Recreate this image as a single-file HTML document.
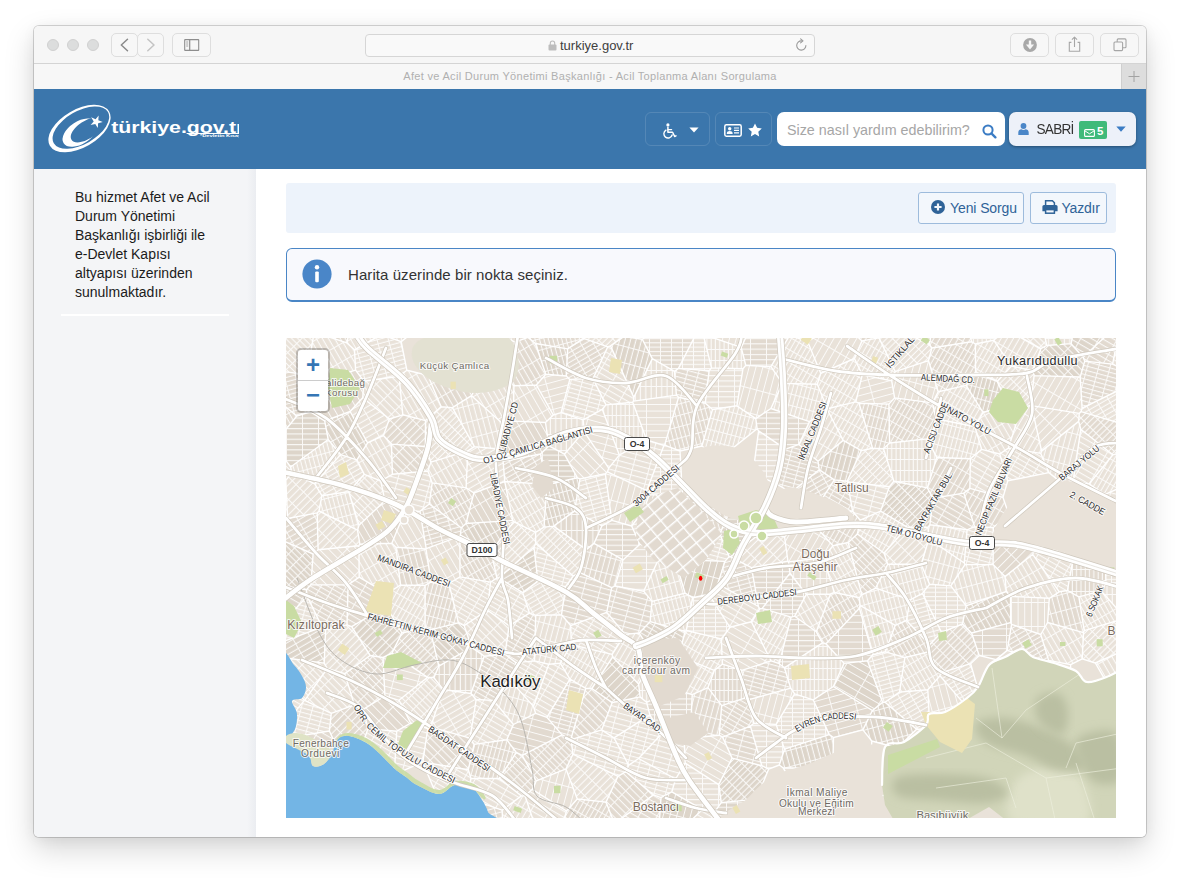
<!DOCTYPE html>
<html lang="tr">
<head>
<meta charset="utf-8">
<title>Afet ve Acil Durum Yönetimi Başkanlığı - Acil Toplanma Alanı Sorgulama</title>
<style>
*{box-sizing:border-box;margin:0;padding:0}
html,body{width:1180px;height:879px;overflow:hidden;background:#fff}
body{font-family:"Liberation Sans","DejaVu Sans",sans-serif;color:#222;position:relative}
#win{position:absolute;left:34px;top:26px;width:1112px;height:811px;border-radius:5px;background:#fff;
  box-shadow:0 0 0 1px rgba(0,0,0,.16),0 12px 30px rgba(0,0,0,.17),0 2px 14px rgba(0,0,0,.05);overflow:hidden}
/* ---------- safari chrome ---------- */
#tb{position:absolute;left:0;top:0;width:1112px;height:38px;background:#f6f6f6;border-bottom:1px solid #d4d4d4}
.tl{position:absolute;top:13px;width:12px;height:12px;border-radius:50%;background:#dcdddd;border:1px solid #d0d0d0}
.cb{position:absolute;top:8px;height:22px;border:1px solid #dedede;border-radius:4px;background:#f7f7f7}
#url{position:absolute;left:331px;top:7.500px;width:450px;height:23.500px;border:1px solid #d6d6d6;border-radius:4px;background:#f9f9f9;
  font-size:13px;line-height:21.500px;color:#404040;text-align:left}
#tabbar{position:absolute;left:0;top:38px;width:1112px;height:25px;background:#f7f7f7;font-size:11px;line-height:25px;color:#b0b0b0;text-align:center;letter-spacing:.31px}
#plus{position:absolute;right:0;top:0;width:25px;height:25px;background:#dddddd;border-left:1px solid #cfcfcf;color:#aaa;font-size:17px;line-height:23px;text-align:center}
/* ---------- site header ---------- */
#hd{position:absolute;left:0;top:63px;width:1112px;height:80px;background:#3b76ac}

.hb{position:absolute;top:23px;height:34px;border:1px solid rgba(255,255,255,.13);border-radius:6px}
#search{position:absolute;left:743px;top:23px;width:228px;height:34px;background:#fff;border-radius:7px}
#search span{position:absolute;left:10px;top:8px;font-size:14.3px;line-height:20px;color:#a6a6a6;white-space:nowrap}
#user{position:absolute;left:975px;top:23px;width:127px;height:34px;background:#edf1f9;border-radius:7px;box-shadow:0 1px 3px rgba(0,0,0,.35)}
#uname{position:absolute;left:27.500px;top:8px;font-size:13.6px;line-height:20px;color:#333;letter-spacing:-.75px;transform:scaleY(1.08);transform-origin:50% 70%}
#badge{position:absolute;left:70px;top:9px;width:28px;height:18px;background:#3fba7a;border-radius:2px}
#badge b{position:absolute;left:18px;top:1.500px;font-size:11.500px;line-height:16px;color:#fff;font-weight:700}
/* ---------- body ---------- */
#side{position:absolute;left:0;top:143px;width:222px;height:668px;background:linear-gradient(to right,#f4f5f7 0,#f4f5f7 213px,#ebedf1 222px)}
#side p{position:absolute;left:41px;top:19px;width:150px;font-size:14px;line-height:19px;color:#1b1b1b}
#side hr{position:absolute;left:27px;top:145px;width:168px;height:2px;border:0;background:#fff}
#main{position:absolute;left:222px;top:143px;width:890px;height:668px;background:#fff}
#tools{position:absolute;left:30px;top:14px;width:830px;height:50px;background:#edf3fb;border-radius:3px}
.btn{position:absolute;top:9px;height:32px;border:1px solid #9dbbdc;border-radius:3px;background:#f3f7fc;color:#2f6398;font-size:14px;line-height:30px;white-space:nowrap}
#info{position:absolute;left:30px;top:79px;width:830px;height:54px;border:1px solid #4a86c6;border-bottom-width:2px;border-radius:6px;background:#f8f9fd}
#info span{position:absolute;left:61px;top:16px;letter-spacing:.07px;font-size:15px;line-height:20px;color:#333}
#map{position:absolute;left:30px;top:169px;width:830px;height:480px;background:#e9e4da;overflow:hidden}
#zoomctl{position:absolute;left:10px;top:10px;width:34px;height:65px;border:2px solid rgba(0,0,0,.2);border-radius:5px;background-clip:padding-box;background:#fff}
#zoomctl{background-clip:padding-box}
#zoomctl span{position:absolute;left:0;width:30px;height:30px;text-align:center;font-size:24px;line-height:29px;color:#3576b5;font-weight:700;font-family:"Liberation Sans",sans-serif}
#zoomctl i{position:absolute;left:0;top:30px;width:30px;height:1px;background:#ccc}
</style>
</head>
<body>
<div id="win">
  <div id="tb">
    <div class="tl" style="left:13px"></div><div class="tl" style="left:33px"></div><div class="tl" style="left:53px"></div>

    <div class="cb" style="left:77px;top:7px;width:27px;height:24px;border-radius:5px"><svg width="25" height="22" viewBox="0 0 25 22"><path d="M15.5 5.2 L9.3 11 L15.5 16.8" fill="none" stroke="#8a8a8a" stroke-width="1.5" stroke-linecap="round" stroke-linejoin="round"/></svg></div>
    <div class="cb" style="left:103px;top:7px;width:27px;height:24px;border-radius:5px"><svg width="25" height="22" viewBox="0 0 25 22"><path d="M9.8 5.2 L16 11 L9.8 16.8" fill="none" stroke="#c4c4c4" stroke-width="1.5" stroke-linecap="round" stroke-linejoin="round"/></svg></div>
    <div class="cb" style="left:138px;top:7px;width:39px;height:24px;border-radius:5px"><svg width="37" height="22" viewBox="0 0 37 22"><rect x="11.7" y="5.6" width="14" height="10.8" rx=".4" fill="none" stroke="#8d8d8d" stroke-width="1.1"/><path d="M16.7 5.6V16.4" stroke="#8d8d8d" stroke-width="1.2"/><path d="M13.2 8h2M13.2 10h2M13.2 12h2" stroke="#8d8d8d" stroke-width=".8"/></svg></div>
    <div id="url"><svg style="position:absolute;left:182px;top:5.500px" width="9" height="11" viewBox="0 0 9 11"><rect x=".5" y="4.6" width="8" height="6" rx="1" fill="#bdbdbd"/><path d="M2.3 5V3.2a2.2 2.2 0 0 1 4.4 0V5" fill="none" stroke="#bdbdbd" stroke-width="1.1"/></svg><span style="position:absolute;left:194px;top:0">turkiye.gov.tr</span><svg style="position:absolute;right:6px;top:3.500px" width="13" height="14" viewBox="0 0 13 14"><path d="M10.9 7.6a4.6 4.6 0 1 1-4.4-4.7" fill="none" stroke="#9a9a9a" stroke-width="1.1" stroke-linecap="round"/><path d="M5.6 .9 L8 2.9 L5.6 4.9" fill="none" stroke="#9a9a9a" stroke-width="1.1" stroke-linecap="round" stroke-linejoin="round"/></svg></div>
    <div class="cb" style="left:976px;top:7px;width:39px;height:24px;border-radius:5px"><svg width="37" height="22" viewBox="0 0 37 22"><circle cx="19" cy="11" r="6.9" fill="#a8a8a8"/><path d="M19 6.6v6.2" stroke="#f6f6f6" stroke-width="2.4"/><path d="M14.9 10.6h8.2L19 15.4z" fill="#f6f6f6"/></svg></div>
    <div class="cb" style="left:1021px;top:7px;width:39px;height:24px;border-radius:5px"><svg width="37" height="22" viewBox="0 0 37 22"><path d="M15.4 8.4h-2.1v8.8h10.4V8.4h-2.1" fill="none" stroke="#a6a6a6" stroke-width="1.1"/><path d="M18.5 13V3.4M15.9 5.7l2.6-2.6 2.6 2.6" fill="none" stroke="#a6a6a6" stroke-width="1.1" stroke-linejoin="round"/></svg></div>
    <div class="cb" style="left:1066px;top:7px;width:39px;height:24px;border-radius:5px"><svg width="37" height="22" viewBox="0 0 37 22"><rect x="13" y="8" width="8.6" height="8.6" rx="1" fill="none" stroke="#a6a6a6" stroke-width="1.1"/><path d="M16.2 8V5.9a1 1 0 0 1 1-1h6.8a1 1 0 0 1 1 1v6.8a1 1 0 0 1-1 1H21.6" fill="none" stroke="#a6a6a6" stroke-width="1.1"/></svg></div>
  </div>
  <div id="tabbar">Afet ve Acil Durum Yönetimi Başkanlığı - Acil Toplanma Alanı Sorgulama<div id="plus"><svg width="24" height="25" viewBox="0 0 24 25"><path d="M12 7v11M6.500 12.500h11" stroke="#a2a2a2" stroke-width="1"/></svg></div></div>
  <div id="hd">
    <svg id="logo" style="position:absolute;left:10px;top:10px" width="200" height="60" viewBox="44 99 200 60">
      <defs>
        <mask id="mring"><rect x="40" y="95" width="210" height="70" fill="#fff"/><ellipse cx="80.9" cy="127.6" rx="31.3" ry="16.5" transform="rotate(-30 80.9 127.6)" fill="#000"/></mask>
        <mask id="mcres"><rect x="40" y="95" width="210" height="70" fill="#fff"/><ellipse cx="86.6" cy="130" rx="18" ry="9" transform="rotate(-33 86.6 130)" fill="#000"/></mask>
      </defs>
      <g mask="url(#mring)"><ellipse cx="79.5" cy="128.6" rx="34.2" ry="19" transform="rotate(-30 79.5 128.6)" fill="#fff"/></g>
      <g mask="url(#mcres)"><ellipse cx="80" cy="132.6" rx="19.5" ry="11.2" transform="rotate(-33 80 132.6)" fill="#fff"/></g>
      <polygon points="98.67,115.48 98.32,120.28 102.78,122.06 98.12,123.21 97.80,128.00 95.26,123.92 90.60,125.10 93.71,121.43 91.14,117.36 95.60,119.17" fill="#fff"/>
      <text x="111.2" y="132.6" font-family="'Liberation Sans','DejaVu Sans',sans-serif" font-weight="700" font-size="15.6" fill="#fff" textLength="133.2" lengthAdjust="spacingAndGlyphs">türkiye.gov.tr</text>
      <rect x="186.6" y="133" width="60" height="1" fill="#fff"/>
      <text x="200" y="136.9" font-family="'Liberation Sans',sans-serif" font-weight="700" font-size="3" fill="#fff" textLength="50" lengthAdjust="spacingAndGlyphs">*Devletin Kısayolu</text>
    </svg>
    <div style="position:absolute;left:204.5px;top:0;width:30px;height:80px;background:#3b76ac"></div>

    <div class="hb" style="left:611px;width:65px">
      <svg style="position:absolute;left:16px;top:9.500px" width="15" height="16" viewBox="0 0 16 17"><circle cx="6.3" cy="2" r="1.7" fill="#fff"/><path d="M6.3 4.6v5.2h5l2.2 4.6 1.4-.7" fill="none" stroke="#fff" stroke-width="1.6" stroke-linejoin="round" stroke-linecap="round"/><path d="M6.6 7h3.6" stroke="#fff" stroke-width="1.4" stroke-linecap="round"/><path d="M4.2 7.6a4.5 4.5 0 1 0 6.6 5.2" fill="none" stroke="#fff" stroke-width="1.5" stroke-linecap="round"/></svg>
      <svg style="position:absolute;left:43px;top:14px" width="10" height="6" viewBox="0 0 10 6"><path d="M.4 .4h9.2L5 5.6z" fill="#fff"/></svg>
    </div>
    <div class="hb" style="left:681px;width:57px">
      <svg style="position:absolute;left:8px;top:11px" width="18" height="13" viewBox="0 0 18 13"><rect x=".8" y=".8" width="16.4" height="11.4" rx="1.6" fill="none" stroke="#fff" stroke-width="1.5"/><circle cx="5.700" cy="4.700" r="1.700" fill="#fff"/><path d="M2.800 10V9.200c0-1.600 1.300-2.300 2.900-2.300s2.900.7 2.900 2.300V10z" fill="#fff"/><path d="M10 4h5M10 6.4h5M10 8.8h5" stroke="#fff" stroke-width="1.2"/></svg>
      <svg style="position:absolute;left:32px;top:9.500px" width="14" height="14" viewBox="0 0 14 14"><polygon points="7,0.4 9.1,4.8 13.8,5.4 10.3,8.7 11.2,13.4 7,11.1 2.8,13.4 3.7,8.7 0.2,5.4 4.9,4.8" fill="#fff"/></svg>
    </div>
    <div id="search"><span>Size nasıl yardım edebilirim?</span>
      <svg style="position:absolute;left:205px;top:11.5px" width="15" height="15" viewBox="0 0 15 15"><circle cx="6" cy="6" r="4.6" fill="none" stroke="#3b7cc4" stroke-width="2"/><path d="M9.4 9.4l4 4" stroke="#3b7cc4" stroke-width="2.3" stroke-linecap="round"/></svg>
    </div>
    <div id="user">
      <svg style="position:absolute;left:9px;top:11px" width="11" height="12" viewBox="0 0 11 12"><circle cx="5.5" cy="3" r="2.9" fill="#4a86c8"/><path d="M0.3 12V9.6C.3 7.4 2 6.3 3.4 6.3c.6.5 1.3.8 2.1.8s1.500-.3 2.100-.8C9 6.300 10.700 7.400 10.700 9.600V12z" fill="#4a86c8"/></svg>
      <span id="uname">SABRİ</span>
      <span id="badge"><svg style="position:absolute;left:4.500px;top:7.500px" width="11" height="8" viewBox="0 0 11 8"><rect x=".6" y=".6" width="9.800" height="6.800" rx="1" fill="none" stroke="#fff" stroke-width="1.100"/><path d="M.8 1.800l4.700 3 4.700-3" fill="none" stroke="#fff" stroke-width="1"/></svg><b>5</b></span>
      <svg style="position:absolute;left:107px;top:14px" width="10" height="6" viewBox="0 0 10 6"><path d="M.3 .4h9.400L5 5.700z" fill="#3b7cc4"/></svg>
    </div>
  </div>
  <div id="side">
    <p>Bu hizmet Afet ve Acil<br>Durum Yönetimi<br>Başkanlığı işbirliği ile<br>e-Devlet Kapısı<br>altyapısı üzerinden<br>sunulmaktadır.</p>
    <hr>
  </div>
  <div id="main">
    <div id="tools">
      <div class="btn" style="left:632px;width:106px"><svg style="position:absolute;left:11.500px;top:7px" width="14" height="14" viewBox="0 0 14 14"><circle cx="7" cy="7" r="7" fill="#2f6398"/><path d="M7 3.400v7.200M3.400 7h7.200" stroke="#f3f7fc" stroke-width="2.200"/></svg><span style="position:absolute;left:31px;top:0;letter-spacing:-.1px">Yeni Sorgu</span></div>
      <div class="btn" style="left:744px;width:77px"><svg style="position:absolute;left:11px;top:7px" width="16" height="14" viewBox="0 0 16 14"><path d="M3.600 5.400V.8h6.800l2 2v2.600" fill="none" stroke="#2f6398" stroke-width="1.500"/><path d="M.4 6.600a1.600 1.600 0 0 1 1.600-1.600h12a1.600 1.600 0 0 1 1.600 1.600v4.600h-3V9H3.400v2.200h-3z" fill="#2f6398"/><rect x="3.600" y="9.600" width="8.800" height="3.600" fill="none" stroke="#2f6398" stroke-width="1.500"/></svg><span style="position:absolute;left:30.500px;top:0;letter-spacing:-.2px">Yazdır</span></div>
    </div>
    <div id="info"><svg style="position:absolute;left:14.500px;top:10px" width="30" height="30" viewBox="0 0 30 30"><circle cx="15" cy="15" r="14.600" fill="#4a86c8"/><circle cx="15" cy="8.300" r="2.200" fill="#fff"/><rect x="13.200" y="12.400" width="3.600" height="10.800" rx="1.200" fill="#fff"/></svg><span>Harita üzerinde bir nokta seçiniz.</span></div>
    <div id="map"><!--MAPSTART-->
<svg id="mapsvg" width="830" height="480" viewBox="0 0 830 480" style="position:absolute;left:0;top:0">
<defs><pattern id="gridA" width="13" height="10" patternUnits="userSpaceOnUse" patternTransform="rotate(-40)"><rect width="13" height="10" fill="#e2dad0"/><path d="M0 .7H13M.7 0V10" stroke="#fff" stroke-width="1.4"/></pattern><filter id="bl" x="-20%" y="-20%" width="140%" height="140%"><feGaussianBlur stdDeviation="5"/></filter><pattern id="h0_0" width="11" height="4.3" patternUnits="userSpaceOnUse" patternTransform="rotate(0)"><path d="M0 .5H11M.5 0V4.3" stroke="#fff" stroke-width="1" opacity=".84"/></pattern><pattern id="h0_1" width="16" height="5.3" patternUnits="userSpaceOnUse" patternTransform="rotate(0)"><path d="M0 .5H16M.5 0V5.3" stroke="#fff" stroke-width="1" opacity=".84"/></pattern><pattern id="h0_2" width="24" height="6.6" patternUnits="userSpaceOnUse" patternTransform="rotate(0)"><path d="M0 .5H24M.5 0V6.6" stroke="#fff" stroke-width="1" opacity=".84"/></pattern><pattern id="h15_0" width="11" height="4.3" patternUnits="userSpaceOnUse" patternTransform="rotate(15)"><path d="M0 .5H11M.5 0V4.3" stroke="#fff" stroke-width="1" opacity=".84"/></pattern><pattern id="h15_1" width="16" height="5.3" patternUnits="userSpaceOnUse" patternTransform="rotate(15)"><path d="M0 .5H16M.5 0V5.3" stroke="#fff" stroke-width="1" opacity=".84"/></pattern><pattern id="h15_2" width="24" height="6.6" patternUnits="userSpaceOnUse" patternTransform="rotate(15)"><path d="M0 .5H24M.5 0V6.6" stroke="#fff" stroke-width="1" opacity=".84"/></pattern><pattern id="h30_0" width="11" height="4.3" patternUnits="userSpaceOnUse" patternTransform="rotate(30)"><path d="M0 .5H11M.5 0V4.3" stroke="#fff" stroke-width="1" opacity=".84"/></pattern><pattern id="h30_1" width="16" height="5.3" patternUnits="userSpaceOnUse" patternTransform="rotate(30)"><path d="M0 .5H16M.5 0V5.3" stroke="#fff" stroke-width="1" opacity=".84"/></pattern><pattern id="h30_2" width="24" height="6.6" patternUnits="userSpaceOnUse" patternTransform="rotate(30)"><path d="M0 .5H24M.5 0V6.6" stroke="#fff" stroke-width="1" opacity=".84"/></pattern><pattern id="h45_0" width="11" height="4.3" patternUnits="userSpaceOnUse" patternTransform="rotate(45)"><path d="M0 .5H11M.5 0V4.3" stroke="#fff" stroke-width="1" opacity=".84"/></pattern><pattern id="h45_1" width="16" height="5.3" patternUnits="userSpaceOnUse" patternTransform="rotate(45)"><path d="M0 .5H16M.5 0V5.3" stroke="#fff" stroke-width="1" opacity=".84"/></pattern><pattern id="h45_2" width="24" height="6.6" patternUnits="userSpaceOnUse" patternTransform="rotate(45)"><path d="M0 .5H24M.5 0V6.6" stroke="#fff" stroke-width="1" opacity=".84"/></pattern><pattern id="h60_0" width="11" height="4.3" patternUnits="userSpaceOnUse" patternTransform="rotate(60)"><path d="M0 .5H11M.5 0V4.3" stroke="#fff" stroke-width="1" opacity=".84"/></pattern><pattern id="h60_1" width="16" height="5.3" patternUnits="userSpaceOnUse" patternTransform="rotate(60)"><path d="M0 .5H16M.5 0V5.3" stroke="#fff" stroke-width="1" opacity=".84"/></pattern><pattern id="h60_2" width="24" height="6.6" patternUnits="userSpaceOnUse" patternTransform="rotate(60)"><path d="M0 .5H24M.5 0V6.6" stroke="#fff" stroke-width="1" opacity=".84"/></pattern><pattern id="h75_0" width="11" height="4.3" patternUnits="userSpaceOnUse" patternTransform="rotate(75)"><path d="M0 .5H11M.5 0V4.3" stroke="#fff" stroke-width="1" opacity=".84"/></pattern><pattern id="h75_1" width="16" height="5.3" patternUnits="userSpaceOnUse" patternTransform="rotate(75)"><path d="M0 .5H16M.5 0V5.3" stroke="#fff" stroke-width="1" opacity=".84"/></pattern><pattern id="h75_2" width="24" height="6.6" patternUnits="userSpaceOnUse" patternTransform="rotate(75)"><path d="M0 .5H24M.5 0V6.6" stroke="#fff" stroke-width="1" opacity=".84"/></pattern><pattern id="h90_0" width="11" height="4.3" patternUnits="userSpaceOnUse" patternTransform="rotate(90)"><path d="M0 .5H11M.5 0V4.3" stroke="#fff" stroke-width="1" opacity=".84"/></pattern><pattern id="h90_1" width="16" height="5.3" patternUnits="userSpaceOnUse" patternTransform="rotate(90)"><path d="M0 .5H16M.5 0V5.3" stroke="#fff" stroke-width="1" opacity=".84"/></pattern><pattern id="h90_2" width="24" height="6.6" patternUnits="userSpaceOnUse" patternTransform="rotate(90)"><path d="M0 .5H24M.5 0V6.6" stroke="#fff" stroke-width="1" opacity=".84"/></pattern><pattern id="h105_0" width="11" height="4.3" patternUnits="userSpaceOnUse" patternTransform="rotate(105)"><path d="M0 .5H11M.5 0V4.3" stroke="#fff" stroke-width="1" opacity=".84"/></pattern><pattern id="h105_1" width="16" height="5.3" patternUnits="userSpaceOnUse" patternTransform="rotate(105)"><path d="M0 .5H16M.5 0V5.3" stroke="#fff" stroke-width="1" opacity=".84"/></pattern><pattern id="h105_2" width="24" height="6.6" patternUnits="userSpaceOnUse" patternTransform="rotate(105)"><path d="M0 .5H24M.5 0V6.6" stroke="#fff" stroke-width="1" opacity=".84"/></pattern><pattern id="h120_0" width="11" height="4.3" patternUnits="userSpaceOnUse" patternTransform="rotate(120)"><path d="M0 .5H11M.5 0V4.3" stroke="#fff" stroke-width="1" opacity=".84"/></pattern><pattern id="h120_1" width="16" height="5.3" patternUnits="userSpaceOnUse" patternTransform="rotate(120)"><path d="M0 .5H16M.5 0V5.3" stroke="#fff" stroke-width="1" opacity=".84"/></pattern><pattern id="h120_2" width="24" height="6.6" patternUnits="userSpaceOnUse" patternTransform="rotate(120)"><path d="M0 .5H24M.5 0V6.6" stroke="#fff" stroke-width="1" opacity=".84"/></pattern><pattern id="h135_0" width="11" height="4.3" patternUnits="userSpaceOnUse" patternTransform="rotate(135)"><path d="M0 .5H11M.5 0V4.3" stroke="#fff" stroke-width="1" opacity=".84"/></pattern><pattern id="h135_1" width="16" height="5.3" patternUnits="userSpaceOnUse" patternTransform="rotate(135)"><path d="M0 .5H16M.5 0V5.3" stroke="#fff" stroke-width="1" opacity=".84"/></pattern><pattern id="h135_2" width="24" height="6.6" patternUnits="userSpaceOnUse" patternTransform="rotate(135)"><path d="M0 .5H24M.5 0V6.6" stroke="#fff" stroke-width="1" opacity=".84"/></pattern><pattern id="h150_0" width="11" height="4.3" patternUnits="userSpaceOnUse" patternTransform="rotate(150)"><path d="M0 .5H11M.5 0V4.3" stroke="#fff" stroke-width="1" opacity=".84"/></pattern><pattern id="h150_1" width="16" height="5.3" patternUnits="userSpaceOnUse" patternTransform="rotate(150)"><path d="M0 .5H16M.5 0V5.3" stroke="#fff" stroke-width="1" opacity=".84"/></pattern><pattern id="h150_2" width="24" height="6.6" patternUnits="userSpaceOnUse" patternTransform="rotate(150)"><path d="M0 .5H24M.5 0V6.6" stroke="#fff" stroke-width="1" opacity=".84"/></pattern><pattern id="h165_0" width="11" height="4.3" patternUnits="userSpaceOnUse" patternTransform="rotate(165)"><path d="M0 .5H11M.5 0V4.3" stroke="#fff" stroke-width="1" opacity=".84"/></pattern><pattern id="h165_1" width="16" height="5.3" patternUnits="userSpaceOnUse" patternTransform="rotate(165)"><path d="M0 .5H16M.5 0V5.3" stroke="#fff" stroke-width="1" opacity=".84"/></pattern><pattern id="h165_2" width="24" height="6.6" patternUnits="userSpaceOnUse" patternTransform="rotate(165)"><path d="M0 .5H24M.5 0V6.6" stroke="#fff" stroke-width="1" opacity=".84"/></pattern></defs>
<rect width="830" height="480" fill="#e9e2d9"/>
<g><path d="M60.9 4.9L61.9 0L46 0Z" fill="#e2dad0"/><path d="M60.9 4.9L61.9 0L46 0Z" fill="url(#h60_0)"/><path d="M60.9 4.9L68.5 11.8L89.5 0L61.9 0Z" fill="url(#h60_0)"/><path d="M115.2 3.6L119.8 0L104.7 0Z" fill="url(#h75_0)"/><path d="M229 4.2L240.2 0L220.9 0Z" fill="url(#h75_2)"/><path d="M249.4 5.5L281.6 10.9L297.5 0.4L297.3 0L242.7 0Z" fill="#e2dad0"/><path d="M249.4 5.5L281.6 10.9L297.5 0.4L297.3 0L242.7 0Z" fill="url(#h75_0)"/><path d="M297.5 0.4L321.8 8.8L324.5 7.9L335.7 0L297.3 0Z" fill="url(#h135_0)"/><path d="M455.2 9.4L459.6 0L427.6 0Z" fill="url(#h105_2)"/><path d="M521.7 3.7L527.5 0L511.6 0Z" fill="url(#h120_0)"/><path d="M576 2.9L592.2 0L572.8 0Z" fill="#e2dad0"/><path d="M576 2.9L592.2 0L572.8 0Z" fill="url(#h120_0)"/><path d="M644.5 0L630.2 0L643.3 6.5Z" fill="url(#h105_0)"/><path d="M643.3 6.5L645.8 10L685.5 3.7L684.7 0L644.5 0Z" fill="#e2dad0"/><path d="M643.3 6.5L645.8 10L685.5 3.7L684.7 0L644.5 0Z" fill="url(#h120_1)"/><path d="M685.5 3.7L689.3 6L707.6 2.2L710.4 0L684.7 0Z" fill="url(#h90_0)"/><path d="M754.9 10.7L760.7 7.5L759.3 0L736.1 0Z" fill="url(#h45_0)"/><path d="M786.2 0L759.3 0L760.7 7.5L785.1 5.6Z" fill="url(#h90_1)"/><path d="M817.7 0L786.2 0L785.1 5.6L797.1 19.2Z" fill="#ddd5ca"/><path d="M817.7 0L786.2 0L785.1 5.6L797.1 19.2Z" fill="url(#h30_1)"/><path d="M21.1 36.7L27.2 0L0 0L0 33.9Z" fill="url(#h45_0)"/><path d="M21.1 36.7L27.4 44.9L69.6 32.1L68.5 11.8L60.9 4.9L46 0L27.2 0Z" fill="url(#h60_1)"/><path d="M68.5 11.8L69.6 32.1L77.9 43.3L113.1 38.2L120.9 32.3L115.2 3.6L104.7 0L89.5 0Z" fill="url(#h165_0)"/><path d="M229 4.2L218 36.9L227.9 47.8L250.4 47L259.8 36.2L249.4 5.5L242.7 0L240.2 0Z" fill="#e2dad0"/><path d="M229 4.2L218 36.9L227.9 47.8L250.4 47L259.8 36.2L249.4 5.5L242.7 0L240.2 0Z" fill="url(#h60_1)"/><path d="M280.3 38L281.6 10.9L249.4 5.5L259.8 36.2Z" fill="#ddd5ca"/><path d="M280.3 38L281.6 10.9L249.4 5.5L259.8 36.2Z" fill="url(#h75_0)"/><path d="M283.8 41.4L307 40.6L321.8 8.8L297.5 0.4L281.6 10.9L280.3 38Z" fill="#e2dad0"/><path d="M283.8 41.4L307 40.6L321.8 8.8L297.5 0.4L281.6 10.9L280.3 38Z" fill="url(#h150_0)"/><path d="M366.3 20.6L356.3 1.3L347.5 0L335.7 0L324.5 7.9L347.8 59.4Z" fill="#ddd5ca"/><path d="M366.3 20.6L356.3 1.3L347.5 0L335.7 0L324.5 7.9L347.8 59.4Z" fill="url(#h105_1)"/><path d="M356.3 1.3L366.3 20.6L388.5 33.4L392.5 30.4L407.9 0L358.1 0Z" fill="#e2dad0"/><path d="M356.3 1.3L366.3 20.6L388.5 33.4L392.5 30.4L407.9 0L358.1 0Z" fill="url(#h0_0)"/><path d="M392.5 30.4L423.1 32.8L425.5 29.9L418.1 0L407.9 0Z" fill="url(#h0_0)"/><path d="M457 30.7L459.8 27.4L455.2 9.4L427.6 0L418.1 0L425.5 29.9Z" fill="url(#h90_0)"/><path d="M455.2 9.4L459.8 27.4L484.9 28.6L502.1 0L459.6 0Z" fill="#e2dad0"/><path d="M455.2 9.4L459.8 27.4L484.9 28.6L502.1 0L459.6 0Z" fill="url(#h0_1)"/><path d="M534.8 35.4L521.7 3.7L511.6 0L502.1 0L484.9 28.6L496.4 45.4L531.3 46.3Z" fill="url(#h120_0)"/><path d="M521.7 3.7L534.8 35.4L568.4 20.5L576 2.9L572.8 0L527.5 0Z" fill="url(#h120_2)"/><path d="M576 2.9L568.4 20.5L576.3 36.7L605.7 42.9L609.2 33.6L593 0L592.2 0Z" fill="url(#h120_0)"/><path d="M630.2 0L593 0L609.2 33.6L642.5 22.7L645.8 10L643.3 6.5Z" fill="url(#h135_0)"/><path d="M689.6 34L689.3 6L685.5 3.7L645.8 10L642.5 22.7L652.2 53.8L680.1 47.4Z" fill="#e2dad0"/><path d="M689.6 34L689.3 6L685.5 3.7L645.8 10L642.5 22.7L652.2 53.8L680.1 47.4Z" fill="url(#h120_0)"/><path d="M707.6 2.2L689.3 6L689.6 34L711.2 43.4L725.5 28.1Z" fill="url(#h120_0)"/><path d="M707.6 2.2L725.5 28.1L746.7 32.7L754.9 10.7L736.1 0L710.4 0Z" fill="url(#h120_1)"/><path d="M797.1 19.2L785.1 5.6L760.7 7.5L754.9 10.7L746.7 32.7L748.1 37.6L794.2 39L798.7 23.1Z" fill="#ddd5ca"/><path d="M797.1 19.2L785.1 5.6L760.7 7.5L754.9 10.7L746.7 32.7L748.1 37.6L794.2 39L798.7 23.1Z" fill="url(#h45_1)"/><path d="M826.6 26.1L830 8.8L830 0L817.7 0L797.1 19.2L798.7 23.1Z" fill="#e2dad0"/><path d="M826.6 26.1L830 8.8L830 0L817.7 0L797.1 19.2L798.7 23.1Z" fill="url(#h30_1)"/><path d="M826.6 26.1L830 27.8L830 8.8Z" fill="url(#h30_0)"/><path d="M10.8 78L24.6 73.9L27.4 44.9L21.1 36.7L0 33.9L0 69.2Z" fill="#e2dad0"/><path d="M10.8 78L24.6 73.9L27.4 44.9L21.1 36.7L0 33.9L0 69.2Z" fill="url(#h165_0)"/><path d="M69.6 32.1L27.4 44.9L24.6 73.9L38.7 83L64.1 73.5L76.7 59.7L77.9 43.3Z" fill="#e2dad0"/><path d="M69.6 32.1L27.4 44.9L24.6 73.9L38.7 83L64.1 73.5L76.7 59.7L77.9 43.3Z" fill="url(#h60_2)"/><path d="M77.9 43.3L76.7 59.7L103.4 81L116.8 76.8L113.1 38.2Z" fill="url(#h45_1)"/><path d="M116.8 76.8L139.5 82.6L155.1 68.7L142 37.4L120.9 32.3L113.1 38.2Z" fill="url(#h60_1)"/><path d="M155.1 68.7L166.4 69.6L185.5 57.7L193.6 42L185.8 31.2L148.9 30.1L142 37.4Z" fill="#e2dad0"/><path d="M155.1 68.7L166.4 69.6L185.5 57.7L193.6 42L185.8 31.2L148.9 30.1L142 37.4Z" fill="url(#h60_1)"/><path d="M220.1 88.8L227.4 83.1L227.9 47.8L218 36.9L193.6 42L185.5 57.7Z" fill="url(#h60_1)"/><path d="M227.9 47.8L227.4 83.1L259.5 84.5L267.3 77L250.4 47Z" fill="url(#h60_2)"/><path d="M267.3 77L275.1 74.7L283.8 41.4L280.3 38L259.8 36.2L250.4 47Z" fill="url(#h165_2)"/><path d="M297.2 81.9L316.3 71.3L320 66.9L307 40.6L283.8 41.4L275.1 74.7Z" fill="url(#h15_0)"/><path d="M347.8 59.4L324.5 7.9L321.8 8.8L307 40.6L320 66.9L346.7 64.2L347.5 63.1Z" fill="url(#h30_1)"/><path d="M390.4 57.1L388.5 33.4L366.3 20.6L347.8 59.4L347.5 63.1Z" fill="url(#h90_1)"/><path d="M419.3 65.2L423.1 32.8L392.5 30.4L388.5 33.4L390.4 57.1L392.6 59.3Z" fill="#e2dad0"/><path d="M419.3 65.2L423.1 32.8L392.5 30.4L388.5 33.4L390.4 57.1L392.6 59.3Z" fill="url(#h15_0)"/><path d="M457 30.7L425.5 29.9L423.1 32.8L419.3 65.2L426.5 71.5L450.9 67.8Z" fill="url(#h0_1)"/><path d="M484.9 70.5L496.4 45.4L484.9 28.6L459.8 27.4L457 30.7L450.9 67.8L469.8 80.6Z" fill="url(#h105_2)"/><path d="M541.1 71.3L541.3 70.8L531.3 46.3L496.4 45.4L484.9 70.5L523.5 83.6Z" fill="url(#h105_0)"/><path d="M569.8 63.9L576.3 36.7L568.4 20.5L534.8 35.4L531.3 46.3L541.3 70.8Z" fill="url(#h120_0)"/><path d="M605.7 42.9L576.3 36.7L569.8 63.9L573 65.2L602.9 66.1L608.6 59.9Z" fill="url(#h165_2)"/><path d="M652.2 53.8L642.5 22.7L609.2 33.6L605.7 42.9L608.6 59.9L646.5 64.9Z" fill="url(#h105_2)"/><path d="M649.9 80.8L688.9 88.7L697.1 74.5L680.1 47.4L652.2 53.8L646.5 64.9Z" fill="url(#h120_0)"/><path d="M722.1 66.6L711.2 43.4L689.6 34L680.1 47.4L697.1 74.5Z" fill="#ddd5ca"/><path d="M722.1 66.6L711.2 43.4L689.6 34L680.1 47.4L697.1 74.5Z" fill="url(#h105_0)"/><path d="M746.7 32.7L725.5 28.1L711.2 43.4L722.1 66.6L735.1 70.2L744.8 67.3L748.1 37.6Z" fill="url(#h135_0)"/><path d="M748.1 37.6L744.8 67.3L745.5 67.6L793.2 75.4L795 73.6L796.1 70.1L794.2 39Z" fill="url(#h120_2)"/><path d="M826.6 26.1L798.7 23.1L794.2 39L796.1 70.1L830 53.6L830 27.8Z" fill="#e2dad0"/><path d="M826.6 26.1L798.7 23.1L794.2 39L796.1 70.1L830 53.6L830 27.8Z" fill="url(#h15_0)"/><path d="M796.1 70.1L795 73.6L830 84L830 53.6Z" fill="url(#h150_0)"/><path d="M10.8 78L0 69.2L0 91.4Z" fill="#e2dad0"/><path d="M10.8 78L0 69.2L0 91.4Z" fill="url(#h60_0)"/><path d="M4.6 129L42.2 101.5L38.7 83L24.6 73.9L10.8 78L0 91.4L0 122.7Z" fill="#ddd5ca"/><path d="M4.6 129L42.2 101.5L38.7 83L24.6 73.9L10.8 78L0 91.4L0 122.7Z" fill="url(#h0_1)"/><path d="M42.2 101.5L54.6 116.6L70.9 121.8L81.6 104.8L64.1 73.5L38.7 83Z" fill="#ddd5ca"/><path d="M42.2 101.5L54.6 116.6L70.9 121.8L81.6 104.8L64.1 73.5L38.7 83Z" fill="url(#h60_1)"/><path d="M103.4 81L76.7 59.7L64.1 73.5L81.6 104.8L97.4 97.5Z" fill="url(#h150_1)"/><path d="M103.4 81L97.4 97.5L105.5 106.1L139.4 108.5L139.5 82.6L116.8 76.8Z" fill="#e2dad0"/><path d="M103.4 81L97.4 97.5L105.5 106.1L139.4 108.5L139.5 82.6L116.8 76.8Z" fill="url(#h135_1)"/><path d="M139.5 82.6L139.4 108.5L144.9 124.1L181.8 112.8L188.4 108.6L166.4 69.6L155.1 68.7Z" fill="url(#h135_0)"/><path d="M166.4 69.6L188.4 108.6L210.1 110.8L220.1 88.8L185.5 57.7Z" fill="url(#h75_1)"/><path d="M210.1 110.8L217.1 123.4L254.5 116L262.9 107.9L259.5 84.5L227.4 83.1L220.1 88.8Z" fill="#e2dad0"/><path d="M210.1 110.8L217.1 123.4L254.5 116L262.9 107.9L259.5 84.5L227.4 83.1L220.1 88.8Z" fill="url(#h60_2)"/><path d="M259.5 84.5L262.9 107.9L278.4 116.2L297.9 93.4L297.2 81.9L275.1 74.7L267.3 77Z" fill="url(#h90_1)"/><path d="M333.3 117.1L316.3 71.3L297.2 81.9L297.9 93.4L322.7 130.1Z" fill="url(#h15_2)"/><path d="M360.6 101.8L346.7 64.2L320 66.9L316.3 71.3L333.3 117.1Z" fill="url(#h90_0)"/><path d="M392.6 59.3L390.4 57.1L347.5 63.1L346.7 64.2L360.6 101.8L378 107.3L378.6 107.2Z" fill="url(#h0_2)"/><path d="M394 113L415.9 108L426.5 71.5L419.3 65.2L392.6 59.3L378.6 107.2Z" fill="#e2dad0"/><path d="M394 113L415.9 108L426.5 71.5L419.3 65.2L392.6 59.3L378.6 107.2Z" fill="url(#h75_0)"/><path d="M469.8 80.6L450.9 67.8L426.5 71.5L415.9 108L433.3 120.9L471.1 90.7Z" fill="url(#h105_0)"/><path d="M484.9 70.5L469.8 80.6L471.1 90.7L472.6 92.8L499.6 111.2L513 106.4L523.5 83.6Z" fill="#e2dad0"/><path d="M484.9 70.5L469.8 80.6L471.1 90.7L472.6 92.8L499.6 111.2L513 106.4L523.5 83.6Z" fill="url(#h0_1)"/><path d="M513 106.4L532 123.2L557.2 102.4L541.1 71.3L523.5 83.6Z" fill="url(#h120_1)"/><path d="M557.2 102.4L575.3 112.6L586.6 110.2L573 65.2L569.8 63.9L541.3 70.8L541.1 71.3Z" fill="url(#h120_0)"/><path d="M602.9 66.1L573 65.2L586.6 110.2L597.5 110.7L603.6 105Z" fill="#e2dad0"/><path d="M602.9 66.1L573 65.2L586.6 110.2L597.5 110.7L603.6 105Z" fill="url(#h105_0)"/><path d="M608.6 59.9L602.9 66.1L603.6 105L641.3 100.9L649.9 80.8L646.5 64.9Z" fill="#e2dad0"/><path d="M608.6 59.9L602.9 66.1L603.6 105L641.3 100.9L649.9 80.8L646.5 64.9Z" fill="url(#h120_0)"/><path d="M641.3 100.9L650.8 119.5L684.3 120.7L695.7 111.4L688.9 88.7L649.9 80.8Z" fill="url(#h105_0)"/><path d="M722.4 110.1L735.1 70.2L722.1 66.6L697.1 74.5L688.9 88.7L695.7 111.4L713.7 116Z" fill="url(#h60_1)"/><path d="M754.8 115.4L755.6 113.1L745.5 67.6L744.8 67.3L735.1 70.2L722.4 110.1Z" fill="url(#h120_1)"/><path d="M745.5 67.6L755.6 113.1L792.7 83.4L793.2 75.4Z" fill="url(#h135_2)"/><path d="M795 73.6L793.2 75.4L792.7 83.4L794.8 91.2L826.9 116.7L830 116L830 84Z" fill="#e2dad0"/><path d="M795 73.6L793.2 75.4L792.7 83.4L794.8 91.2L826.9 116.7L830 116L830 84Z" fill="url(#h135_0)"/><path d="M5.8 134.5L4.6 129L0 122.7L0 142.1Z" fill="url(#h45_1)"/><path d="M4.6 129L5.8 134.5L28.7 145.8L54.6 116.6L42.2 101.5Z" fill="url(#h75_0)"/><path d="M28.7 145.8L35.9 157.7L62.8 153.6L78.3 136.3L70.9 121.8L54.6 116.6Z" fill="url(#h150_0)"/><path d="M97.4 97.5L81.6 104.8L70.9 121.8L78.3 136.3L94.7 142.8L106.4 136.3L105.5 106.1Z" fill="url(#h60_1)"/><path d="M106.4 136.3L141.9 133L144.9 124.1L139.4 108.5L105.5 106.1Z" fill="#e2dad0"/><path d="M106.4 136.3L141.9 133L144.9 124.1L139.4 108.5L105.5 106.1Z" fill="url(#h45_1)"/><path d="M144.9 124.1L141.9 133L146.2 144.9L180.1 149.9L181.8 112.8Z" fill="url(#h60_1)"/><path d="M188.4 108.6L181.8 112.8L180.1 149.9L187.9 155L218.7 143.6L218.8 143.5L217.1 123.4L210.1 110.8Z" fill="url(#h150_1)"/><path d="M260.4 146.4L254.5 116L217.1 123.4L218.8 143.5Z" fill="#e2dad0"/><path d="M260.4 146.4L254.5 116L217.1 123.4L218.8 143.5Z" fill="url(#h150_0)"/><path d="M261 146.8L291.4 139.8L278.4 116.2L262.9 107.9L254.5 116L260.4 146.4Z" fill="#ddd5ca"/><path d="M261 146.8L291.4 139.8L278.4 116.2L262.9 107.9L254.5 116L260.4 146.4Z" fill="url(#h0_1)"/><path d="M321.5 133.8L322.7 130.1L297.9 93.4L278.4 116.2L291.4 139.8L294 140.9L319.3 135.8Z" fill="url(#h45_2)"/><path d="M378 107.3L360.6 101.8L333.3 117.1L322.7 130.1L321.5 133.8L360.7 152.7Z" fill="url(#h15_1)"/><path d="M394 113L378.6 107.2L378 107.3L360.7 152.7L363.2 156.6L396.5 158Z" fill="url(#h0_0)"/><path d="M499.6 111.2L472.6 92.8L466.9 135.5L490.9 145.9Z" fill="url(#h0_1)"/><path d="M513 106.4L499.6 111.2L490.9 145.9L491.3 146.5L505.2 154.4L533.2 131.7L532 123.2Z" fill="#e2dad0"/><path d="M513 106.4L499.6 111.2L490.9 145.9L491.3 146.5L505.2 154.4L533.2 131.7L532 123.2Z" fill="url(#h15_0)"/><path d="M532 123.2L533.2 131.7L548.3 141.9L561.1 143.3L575.3 112.6L557.2 102.4Z" fill="#ddd5ca"/><path d="M532 123.2L533.2 131.7L548.3 141.9L561.1 143.3L575.3 112.6L557.2 102.4Z" fill="url(#h105_1)"/><path d="M561.5 144L603.4 148.7L607.9 143.2L597.5 110.7L586.6 110.2L575.3 112.6L561.1 143.3Z" fill="url(#h135_0)"/><path d="M603.6 105L597.5 110.7L607.9 143.2L641.3 149.9L650.8 119.5L641.3 100.9Z" fill="url(#h90_0)"/><path d="M684.3 120.7L650.8 119.5L641.3 149.9L647.1 160.3L677.8 155.1L683.9 150.4Z" fill="#e2dad0"/><path d="M684.3 120.7L650.8 119.5L641.3 149.9L647.1 160.3L677.8 155.1L683.9 150.4Z" fill="url(#h120_1)"/><path d="M695.7 111.4L684.3 120.7L683.9 150.4L717 159.4L721.8 142.8L713.7 116Z" fill="url(#h30_1)"/><path d="M721.8 142.8L762.9 134.6L754.8 115.4L722.4 110.1L713.7 116Z" fill="url(#h30_0)"/><path d="M775.3 144.6L787.2 142.6L794.8 91.2L792.7 83.4L755.6 113.1L754.8 115.4L762.9 134.6Z" fill="url(#h105_1)"/><path d="M826.9 116.7L794.8 91.2L787.2 142.6L792.7 144.7L803.2 145.9Z" fill="url(#h30_1)"/><path d="M830 151.5L830 116L826.9 116.7L803.2 145.9L818.2 156.8Z" fill="url(#h120_0)"/><path d="M1.6 180.5L0 147.1L0 182.1Z" fill="#e2dad0"/><path d="M1.6 180.5L0 147.1L0 182.1Z" fill="url(#h60_1)"/><path d="M0 142.1L0 147.1L1.6 180.5L31.2 174.9L33 173L35.9 157.7L28.7 145.8L5.8 134.5Z" fill="url(#h135_1)"/><path d="M33 173L71.5 192.1L73 187.3L62.8 153.6L35.9 157.7Z" fill="url(#h75_0)"/><path d="M73 187.3L98.9 162.7L94.7 142.8L78.3 136.3L62.8 153.6Z" fill="url(#h45_0)"/><path d="M143.3 166L146.2 144.9L141.9 133L106.4 136.3L94.7 142.8L98.9 162.7L117.5 177L134 173.3Z" fill="url(#h15_1)"/><path d="M175.2 189.7L180 185.5L187.9 155L180.1 149.9L146.2 144.9L143.3 166Z" fill="#e2dad0"/><path d="M175.2 189.7L180 185.5L187.9 155L180.1 149.9L146.2 144.9L143.3 166Z" fill="url(#h60_0)"/><path d="M187.9 155L180 185.5L226.7 182.4L218.7 143.6Z" fill="#e2dad0"/><path d="M187.9 155L180 185.5L226.7 182.4L218.7 143.6Z" fill="url(#h60_2)"/><path d="M226.7 182.4L227.7 183.6L249.6 194.3L258 189.1L261 146.8L260.4 146.4L218.8 143.5L218.7 143.6Z" fill="url(#h60_0)"/><path d="M294 140.9L291.4 139.8L261 146.8L258 189.1L267.6 188.1L288.5 173.1Z" fill="#ddd5ca"/><path d="M294 140.9L291.4 139.8L261 146.8L258 189.1L267.6 188.1L288.5 173.1Z" fill="url(#h75_0)"/><path d="M325.8 182.3L319.3 135.8L294 140.9L288.5 173.1L316 187.8Z" fill="url(#h165_0)"/><path d="M357.9 172.2L363.2 156.6L360.7 152.7L321.5 133.8L319.3 135.8L325.8 182.3L345.6 188Z" fill="url(#h105_2)"/><path d="M399.3 188.2L398 159.3L396.5 158L363.2 156.6L357.9 172.2L394.9 192.5Z" fill="#e2dad0"/><path d="M399.3 188.2L398 159.3L396.5 158L363.2 156.6L357.9 172.2L394.9 192.5Z" fill="url(#h105_2)"/><path d="M433.8 196L444.7 171L436 150.9L398 159.3L399.3 188.2Z" fill="#e2dad0"/><path d="M433.8 196L444.7 171L436 150.9L398 159.3L399.3 188.2Z" fill="url(#h75_0)"/><path d="M516.9 175.8L518.3 176L529 171.8L548.3 141.9L533.2 131.7L505.2 154.4Z" fill="#e2dad0"/><path d="M516.9 175.8L518.3 176L529 171.8L548.3 141.9L533.2 131.7L505.2 154.4Z" fill="url(#h150_0)"/><path d="M548.3 141.9L529 171.8L566.6 173.3L561.5 144L561.1 143.3Z" fill="#e2dad0"/><path d="M548.3 141.9L529 171.8L566.6 173.3L561.5 144L561.1 143.3Z" fill="url(#h30_0)"/><path d="M594.6 173.1L603.4 148.7L561.5 144L566.6 173.3L574.3 182.2Z" fill="url(#h15_1)"/><path d="M621.2 189.2L642 189.2L643.9 186.7L647.1 160.3L641.3 149.9L607.9 143.2L603.4 148.7L594.6 173.1Z" fill="#ddd5ca"/><path d="M621.2 189.2L642 189.2L643.9 186.7L647.1 160.3L641.3 149.9L607.9 143.2L603.4 148.7L594.6 173.1Z" fill="url(#h135_0)"/><path d="M677.8 155.1L647.1 160.3L643.9 186.7L681.1 191.8L688.6 188.6Z" fill="#e2dad0"/><path d="M677.8 155.1L647.1 160.3L643.9 186.7L681.1 191.8L688.6 188.6Z" fill="url(#h30_1)"/><path d="M722.9 176.7L717 159.4L683.9 150.4L677.8 155.1L688.6 188.6L707.3 189.5Z" fill="#e2dad0"/><path d="M722.9 176.7L717 159.4L683.9 150.4L677.8 155.1L688.6 188.6L707.3 189.5Z" fill="url(#h120_1)"/><path d="M830 172.5L830 151.5L818.2 156.8L823.2 171.4Z" fill="url(#h15_0)"/><path d="M27.1 216L32.1 211.7L31.2 174.9L1.6 180.5L0 182.1L0 204Z" fill="#e2dad0"/><path d="M27.1 216L32.1 211.7L31.2 174.9L1.6 180.5L0 182.1L0 204Z" fill="url(#h150_1)"/><path d="M71.5 192.1L33 173L31.2 174.9L32.1 211.7L72.9 207.7L73.9 206.2Z" fill="url(#h135_1)"/><path d="M105.8 205.3L117.5 177L98.9 162.7L73 187.3L71.5 192.1L73.9 206.2Z" fill="#e2dad0"/><path d="M105.8 205.3L117.5 177L98.9 162.7L73 187.3L71.5 192.1L73.9 206.2Z" fill="url(#h60_2)"/><path d="M117.5 177L105.8 205.3L109.9 209.2L140 211L140.2 210.7L134 173.3Z" fill="url(#h60_2)"/><path d="M140.2 210.7L173.9 198.1L174.4 197.2L175.2 189.7L143.3 166L134 173.3Z" fill="#e2dad0"/><path d="M140.2 210.7L173.9 198.1L174.4 197.2L175.2 189.7L143.3 166L134 173.3Z" fill="url(#h165_0)"/><path d="M174.4 197.2L205.1 213.7L227.7 183.6L226.7 182.4L180 185.5L175.2 189.7Z" fill="#ddd5ca"/><path d="M174.4 197.2L205.1 213.7L227.7 183.6L226.7 182.4L180 185.5L175.2 189.7Z" fill="url(#h60_1)"/><path d="M205.1 213.7L210.9 240L213 239.9L247.9 209.2L249.7 205.5L249.6 194.3L227.7 183.6Z" fill="url(#h135_0)"/><path d="M300.3 211.6L267.6 188.1L258 189.1L249.6 194.3L249.7 205.5L287.3 238L294.6 234.8Z" fill="url(#h135_0)"/><path d="M316 187.8L288.5 173.1L267.6 188.1L300.3 211.6L308 205.4Z" fill="#e2dad0"/><path d="M316 187.8L288.5 173.1L267.6 188.1L300.3 211.6L308 205.4Z" fill="url(#h90_1)"/><path d="M353.9 206.2L345.6 188L325.8 182.3L316 187.8L308 205.4L337 221.9Z" fill="#e2dad0"/><path d="M353.9 206.2L345.6 188L325.8 182.3L316 187.8L308 205.4L337 221.9Z" fill="url(#h0_1)"/><path d="M382.1 214.6L394.9 192.5L357.9 172.2L345.6 188L353.9 206.2L375.3 215.4Z" fill="url(#h165_0)"/><path d="M389 221.5L439 223.4L443.1 218.6L433.8 196L399.3 188.2L394.9 192.5L382.1 214.6Z" fill="url(#h15_0)"/><path d="M468.5 173.4L444.7 171L433.8 196L443.1 218.6L444.6 218.8L478.6 192Z" fill="#ddd5ca"/><path d="M468.5 173.4L444.7 171L433.8 196L443.1 218.6L444.6 218.8L478.6 192Z" fill="url(#h0_0)"/><path d="M444.6 218.8L465.5 229.6L501.9 223.2L498.6 199L478.6 192Z" fill="url(#h135_1)"/><path d="M501.9 223.2L502.6 223.9L537.1 219.8L547 207.7L518.3 176L516.9 175.8L498.6 199Z" fill="url(#h120_2)"/><path d="M574.3 182.2L566.6 173.3L529 171.8L518.3 176L547 207.7L562.2 204.5L571.4 196Z" fill="#e2dad0"/><path d="M574.3 182.2L566.6 173.3L529 171.8L518.3 176L547 207.7L562.2 204.5L571.4 196Z" fill="url(#h120_0)"/><path d="M598.1 215L621.2 189.2L594.6 173.1L574.3 182.2L571.4 196Z" fill="url(#h120_0)"/><path d="M598.1 215L601.7 226.2L635.2 226.3L642.9 200.8L642 189.2L621.2 189.2Z" fill="url(#h135_1)"/><path d="M642.9 200.8L678.3 225L681.1 191.8L643.9 186.7L642 189.2Z" fill="url(#h105_0)"/><path d="M688.6 188.6L681.1 191.8L678.3 225L679 226.6L707.1 226.5L707.3 189.5Z" fill="url(#h15_0)"/><path d="M707.1 226.5L719 238.6L746.7 216.3L750.6 206.6L742.7 182.8L722.9 176.7L707.3 189.5Z" fill="#e2dad0"/><path d="M707.1 226.5L719 238.6L746.7 216.3L750.6 206.6L742.7 182.8L722.9 176.7L707.3 189.5Z" fill="url(#h135_2)"/><path d="M20.4 251.7L24.9 246.8L27.1 216L0 204L0 248.1Z" fill="#ddd5ca"/><path d="M20.4 251.7L24.9 246.8L27.1 216L0 204L0 248.1Z" fill="url(#h45_0)"/><path d="M72.9 207.7L32.1 211.7L27.1 216L24.9 246.8L62.1 246.9L73.2 239.2Z" fill="url(#h45_2)"/><path d="M101 255.7L114.5 247L109.9 209.2L105.8 205.3L73.9 206.2L72.9 207.7L73.2 239.2Z" fill="url(#h60_1)"/><path d="M109.9 209.2L114.5 247L139.1 247.4L145.1 243.9L140 211Z" fill="#e2dad0"/><path d="M109.9 209.2L114.5 247L139.1 247.4L145.1 243.9L140 211Z" fill="url(#h75_1)"/><path d="M140 211L145.1 243.9L162.9 245.5L174 238.9L173.9 198.1L140.2 210.7Z" fill="url(#h60_2)"/><path d="M174 238.9L204.5 244.1L210.9 240L205.1 213.7L174.4 197.2L173.9 198.1Z" fill="#e2dad0"/><path d="M174 238.9L204.5 244.1L210.9 240L205.1 213.7L174.4 197.2L173.9 198.1Z" fill="url(#h60_0)"/><path d="M213 239.9L236.7 254.6L251.9 243.1L247.9 209.2Z" fill="#ddd5ca"/><path d="M213 239.9L236.7 254.6L251.9 243.1L247.9 209.2Z" fill="url(#h150_1)"/><path d="M249.7 205.5L247.9 209.2L251.9 243.1L279.6 248.6L287.3 238Z" fill="url(#h15_0)"/><path d="M337 221.9L308 205.4L300.3 211.6L294.6 234.8L325.7 249.7L329 248Z" fill="#e2dad0"/><path d="M337 221.9L308 205.4L300.3 211.6L294.6 234.8L325.7 249.7L329 248Z" fill="url(#h105_1)"/><path d="M357.7 253.2L375.3 215.4L353.9 206.2L337 221.9L329 248Z" fill="url(#h0_2)"/><path d="M357.7 253.2L366 263.4L399.1 255.1L389 221.5L382.1 214.6L375.3 215.4Z" fill="url(#h75_1)"/><path d="M406.6 259.7L422.9 256.3L431.8 245.8L439 223.4L389 221.5L399.1 255.1Z" fill="#ddd5ca"/><path d="M406.6 259.7L422.9 256.3L431.8 245.8L439 223.4L389 221.5L399.1 255.1Z" fill="url(#h105_2)"/><path d="M431.8 245.8L472.4 268.5L465.5 229.6L444.6 218.8L443.1 218.6L439 223.4Z" fill="#e2dad0"/><path d="M431.8 245.8L472.4 268.5L465.5 229.6L444.6 218.8L443.1 218.6L439 223.4Z" fill="url(#h165_0)"/><path d="M504 235.2L502.6 223.9L501.9 223.2L465.5 229.6L472.4 268.5L473.8 270.8L476.2 270.4Z" fill="#e2dad0"/><path d="M504 235.2L502.6 223.9L501.9 223.2L465.5 229.6L472.4 268.5L473.8 270.8L476.2 270.4Z" fill="url(#h0_1)"/><path d="M544.5 256L548.4 254.5L537.1 219.8L502.6 223.9L504 235.2L520.3 256.3Z" fill="url(#h90_2)"/><path d="M575.8 256.9L562.2 204.5L547 207.7L537.1 219.8L548.4 254.5L573.3 259.8Z" fill="url(#h60_0)"/><path d="M562.2 204.5L575.8 256.9L589.6 250.1L601.7 226.2L598.1 215L571.4 196Z" fill="#e2dad0"/><path d="M562.2 204.5L575.8 256.9L589.6 250.1L601.7 226.2L598.1 215L571.4 196Z" fill="url(#h45_0)"/><path d="M624.1 261.9L636.5 255.4L643.6 246.3L635.2 226.3L601.7 226.2L589.6 250.1Z" fill="url(#h75_0)"/><path d="M635.2 226.3L643.6 246.3L664.8 247.9L679 226.6L678.3 225L642.9 200.8Z" fill="url(#h105_1)"/><path d="M707.1 226.5L679 226.6L664.8 247.9L680.1 267.8L720.3 253.5L719 238.6Z" fill="url(#h75_1)"/><path d="M719 238.6L720.3 253.5L724.5 258.4L763.3 260.3L773.3 253.8L746.7 216.3Z" fill="url(#h60_1)"/><path d="M746.7 216.3L773.3 253.8L781.4 252.5L788.2 214.8L787.4 212.4L750.6 206.6Z" fill="url(#h30_0)"/><path d="M781.4 252.5L792.9 258.9L815 252.8L819.9 245.7L819.6 226.1L788.2 214.8Z" fill="#e2dad0"/><path d="M781.4 252.5L792.9 258.9L815 252.8L819.9 245.7L819.6 226.1L788.2 214.8Z" fill="url(#h90_0)"/><path d="M819.6 226.1L819.9 245.7L830 244.7L830 214.5Z" fill="url(#h0_0)"/><path d="M21.1 258.1L20.4 251.7L0 248.1L0 281.4Z" fill="#ddd5ca"/><path d="M21.1 258.1L20.4 251.7L0 248.1L0 281.4Z" fill="url(#h30_1)"/><path d="M21.1 258.1L0 281.4L0 302.5L36.2 289.2Z" fill="url(#h15_0)"/><path d="M24.9 246.8L20.4 251.7L21.1 258.1L36.2 289.2L39.6 291.4L61 286.9L62.1 246.9Z" fill="#e2dad0"/><path d="M24.9 246.8L20.4 251.7L21.1 258.1L36.2 289.2L39.6 291.4L61 286.9L62.1 246.9Z" fill="url(#h30_0)"/><path d="M62.1 246.9L61 286.9L65.7 288.7L100.1 268L101 255.7L73.2 239.2Z" fill="#e2dad0"/><path d="M62.1 246.9L61 286.9L65.7 288.7L100.1 268L101 255.7L73.2 239.2Z" fill="url(#h30_1)"/><path d="M100.1 268L115.9 295L139.1 289.8L139.1 247.4L114.5 247L101 255.7Z" fill="url(#h120_0)"/><path d="M139.1 247.4L139.1 289.8L144.2 291.9L172.4 284.9L162.9 245.5L145.1 243.9Z" fill="#e2dad0"/><path d="M139.1 247.4L139.1 289.8L144.2 291.9L172.4 284.9L162.9 245.5L145.1 243.9Z" fill="url(#h105_0)"/><path d="M162.9 245.5L172.4 284.9L178.1 287.6L201.5 272.2L204.5 244.1L174 238.9Z" fill="url(#h30_0)"/><path d="M204.5 244.1L201.5 272.2L223.1 287.8L243.5 275.2L236.7 254.6L213 239.9L210.9 240Z" fill="url(#h30_0)"/><path d="M251.9 243.1L236.7 254.6L243.5 275.2L249.7 277.4L275.5 276.8L279.6 248.6Z" fill="url(#h150_0)"/><path d="M294.6 234.8L287.3 238L279.6 248.6L275.5 276.8L284.7 287.5L320.7 274.3L325.7 249.7Z" fill="#e2dad0"/><path d="M294.6 234.8L287.3 238L279.6 248.6L275.5 276.8L284.7 287.5L320.7 274.3L325.7 249.7Z" fill="url(#h15_1)"/><path d="M325.7 249.7L320.7 274.3L339 296.4L353.2 295L364.1 283.7L366 263.4L357.7 253.2L329 248Z" fill="#e2dad0"/><path d="M325.7 249.7L320.7 274.3L339 296.4L353.2 295L364.1 283.7L366 263.4L357.7 253.2L329 248Z" fill="url(#h15_1)"/><path d="M400.3 292.5L406.6 259.7L399.1 255.1L366 263.4L364.1 283.7L399.1 293.5Z" fill="url(#h75_0)"/><path d="M400.3 292.5L435.3 300.9L444 289.3L422.9 256.3L406.6 259.7Z" fill="url(#h0_0)"/><path d="M444 289.3L465.3 283.8L473.8 270.8L472.4 268.5L431.8 245.8L422.9 256.3Z" fill="url(#h30_1)"/><path d="M504 235.2L476.2 270.4L505.1 279.2L508.7 278.2L520.3 256.3Z" fill="#e2dad0"/><path d="M504 235.2L476.2 270.4L505.1 279.2L508.7 278.2L520.3 256.3Z" fill="url(#h0_0)"/><path d="M508.7 278.2L530.3 293.8L544.5 256L520.3 256.3Z" fill="url(#h60_1)"/><path d="M530.3 293.8L536.5 304.9L540 305.8L573.4 270.3L574 267.4L573.3 259.8L548.4 254.5L544.5 256Z" fill="#e2dad0"/><path d="M530.3 293.8L536.5 304.9L540 305.8L573.4 270.3L574 267.4L573.3 259.8L548.4 254.5L544.5 256Z" fill="url(#h60_0)"/><path d="M609.3 287.3L620.4 282.5L624.1 261.9L589.6 250.1L575.8 256.9L573.3 259.8L574 267.4Z" fill="url(#h75_0)"/><path d="M620.4 282.5L643.7 306.7L655.4 294.3L636.5 255.4L624.1 261.9Z" fill="url(#h165_0)"/><path d="M636.5 255.4L655.4 294.3L676.5 286L680.1 267.8L664.8 247.9L643.6 246.3Z" fill="url(#h0_0)"/><path d="M724.5 258.4L720.3 253.5L680.1 267.8L676.5 286L685.6 295L724.7 284.6Z" fill="#ddd5ca"/><path d="M724.5 258.4L720.3 253.5L680.1 267.8L676.5 286L685.6 295L724.7 284.6Z" fill="url(#h60_1)"/><path d="M754.8 296.5L761.6 284.5L763.3 260.3L724.5 258.4L724.7 284.6L725.6 286.4Z" fill="url(#h90_2)"/><path d="M763.3 260.3L761.6 284.5L797.5 294.6L798.2 292.6L792.9 258.9L781.4 252.5L773.3 253.8Z" fill="#e2dad0"/><path d="M763.3 260.3L761.6 284.5L797.5 294.6L798.2 292.6L792.9 258.9L781.4 252.5L773.3 253.8Z" fill="url(#h75_1)"/><path d="M815 252.8L792.9 258.9L798.2 292.6L830 283L830 269.5Z" fill="url(#h60_0)"/><path d="M819.9 245.7L815 252.8L830 269.5L830 244.7Z" fill="url(#h90_1)"/><path d="M38.2 325.1L39.6 291.4L36.2 289.2L0 302.5L0 320.1Z" fill="#ddd5ca"/><path d="M38.2 325.1L39.6 291.4L36.2 289.2L0 302.5L0 320.1Z" fill="url(#h150_1)"/><path d="M58.8 335.6L84.2 317.5L65.7 288.7L61 286.9L39.6 291.4L38.2 325.1L41.3 330.5Z" fill="url(#h135_1)"/><path d="M84.2 317.5L97 319.5L105.9 315.1L115.9 295L100.1 268L65.7 288.7Z" fill="#ddd5ca"/><path d="M84.2 317.5L97 319.5L105.9 315.1L115.9 295L100.1 268L65.7 288.7Z" fill="url(#h135_1)"/><path d="M152.8 328.2L144.2 291.9L139.1 289.8L115.9 295L105.9 315.1L141.6 339.3L147.9 339.6Z" fill="#e2dad0"/><path d="M152.8 328.2L144.2 291.9L139.1 289.8L115.9 295L105.9 315.1L141.6 339.3L147.9 339.6Z" fill="url(#h135_0)"/><path d="M172.4 284.9L144.2 291.9L152.8 328.2L185.7 309.4L178.1 287.6Z" fill="#ddd5ca"/><path d="M172.4 284.9L144.2 291.9L152.8 328.2L185.7 309.4L178.1 287.6Z" fill="url(#h45_1)"/><path d="M201.5 272.2L178.1 287.6L185.7 309.4L198.2 318.3L219 316.2L223.1 287.8Z" fill="url(#h45_1)"/><path d="M223.1 287.8L219 316.2L229.9 324.6L248.5 322.9L249.7 277.4L243.5 275.2Z" fill="#e2dad0"/><path d="M223.1 287.8L219 316.2L229.9 324.6L248.5 322.9L249.7 277.4L243.5 275.2Z" fill="url(#h30_0)"/><path d="M274.3 325.2L285.3 306.6L284.7 287.5L275.5 276.8L249.7 277.4L248.5 322.9L262.8 326.2Z" fill="url(#h105_1)"/><path d="M339 296.4L320.7 274.3L284.7 287.5L285.3 306.6L326.2 316.4Z" fill="url(#h30_0)"/><path d="M353.2 295L339 296.4L326.2 316.4L326.6 319.1L352.6 346.1L368.2 318.9Z" fill="url(#h120_1)"/><path d="M399.1 293.5L364.1 283.7L353.2 295L368.2 318.9L390.6 319.8L392.7 318.2Z" fill="#ddd5ca"/><path d="M399.1 293.5L364.1 283.7L353.2 295L368.2 318.9L390.6 319.8L392.7 318.2Z" fill="url(#h30_0)"/><path d="M428.3 332.4L436.4 326.2L435.3 300.9L400.3 292.5L399.1 293.5L392.7 318.2Z" fill="url(#h120_0)"/><path d="M455.8 332.4L485.1 322.9L465.3 283.8L444 289.3L435.3 300.9L436.4 326.2Z" fill="url(#h30_2)"/><path d="M493.2 325.7L505.1 279.2L476.2 270.4L473.8 270.8L465.3 283.8L485.1 322.9Z" fill="url(#h120_0)"/><path d="M505.1 279.2L493.2 325.7L498.4 329.8L536.5 304.9L530.3 293.8L508.7 278.2Z" fill="#e2dad0"/><path d="M505.1 279.2L493.2 325.7L498.4 329.8L536.5 304.9L530.3 293.8L508.7 278.2Z" fill="url(#h0_1)"/><path d="M558.1 325.4L581.5 322.7L586.8 316.7L573.4 270.3L540 305.8Z" fill="#e2dad0"/><path d="M558.1 325.4L581.5 322.7L586.8 316.7L573.4 270.3L540 305.8Z" fill="url(#h0_2)"/><path d="M573.4 270.3L586.8 316.7L599.4 313.8L609.3 287.3L574 267.4Z" fill="url(#h75_0)"/><path d="M599.4 313.8L618.9 319.5L641.9 314L643.7 306.7L620.4 282.5L609.3 287.3Z" fill="#e2dad0"/><path d="M599.4 313.8L618.9 319.5L641.9 314L643.7 306.7L620.4 282.5L609.3 287.3Z" fill="url(#h60_0)"/><path d="M685.6 295L676.5 286L655.4 294.3L643.7 306.7L641.9 314L654.4 334.8L684.6 325.7L693.2 317.5Z" fill="#e2dad0"/><path d="M685.6 295L676.5 286L655.4 294.3L643.7 306.7L641.9 314L654.4 334.8L684.6 325.7L693.2 317.5Z" fill="url(#h135_0)"/><path d="M724.7 284.6L685.6 295L693.2 317.5L710.2 321.6L721.2 312.4L725.6 286.4Z" fill="#e2dad0"/><path d="M724.7 284.6L685.6 295L693.2 317.5L710.2 321.6L721.2 312.4L725.6 286.4Z" fill="url(#h0_2)"/><path d="M721.2 312.4L759 324.2L762.6 322.4L754.8 296.5L725.6 286.4Z" fill="#e2dad0"/><path d="M721.2 312.4L759 324.2L762.6 322.4L754.8 296.5L725.6 286.4Z" fill="url(#h150_0)"/><path d="M754.8 296.5L762.6 322.4L784.7 326.6L796.2 320.8L797.5 294.6L761.6 284.5Z" fill="url(#h60_1)"/><path d="M796.2 320.8L809.3 325L830 316L830 283L798.2 292.6L797.5 294.6Z" fill="url(#h135_0)"/><path d="M0 340.8L0 379.7L3.2 380.9L18.4 362.4Z" fill="url(#h30_0)"/><path d="M41.3 330.5L38.2 325.1L0 320.1L0 340.8L18.4 362.4L18.7 362.3Z" fill="url(#h45_0)"/><path d="M45.3 375.3L68.4 366.9L58.8 335.6L41.3 330.5L18.7 362.3Z" fill="url(#h45_1)"/><path d="M97 319.5L84.2 317.5L58.8 335.6L68.4 366.9L77.3 371.4L98.9 357.8Z" fill="#e2dad0"/><path d="M97 319.5L84.2 317.5L58.8 335.6L68.4 366.9L77.3 371.4L98.9 357.8Z" fill="url(#h45_0)"/><path d="M141.6 339.3L105.9 315.1L97 319.5L98.9 357.8L113 362.3Z" fill="url(#h15_2)"/><path d="M184.9 355.5L198.2 318.3L185.7 309.4L152.8 328.2L147.9 339.6L157.2 351.5Z" fill="#e2dad0"/><path d="M184.9 355.5L198.2 318.3L185.7 309.4L152.8 328.2L147.9 339.6L157.2 351.5Z" fill="url(#h90_1)"/><path d="M207.5 362.4L226.7 345.1L229.9 324.6L219 316.2L198.2 318.3L184.9 355.5L190.2 361.5Z" fill="#e2dad0"/><path d="M207.5 362.4L226.7 345.1L229.9 324.6L219 316.2L198.2 318.3L184.9 355.5L190.2 361.5Z" fill="url(#h30_0)"/><path d="M262.8 326.2L248.5 322.9L229.9 324.6L226.7 345.1L247.5 368.4Z" fill="url(#h30_0)"/><path d="M260.9 379.4L284 341.2L274.3 325.2L262.8 326.2L247.5 368.4L249.6 375.3Z" fill="url(#h30_1)"/><path d="M299.8 350.4L305.9 350.5L326.6 319.1L326.2 316.4L285.3 306.6L274.3 325.2L284 341.2Z" fill="url(#h120_0)"/><path d="M305.9 350.5L326.2 364.6L354.1 358.9L352.6 346.1L326.6 319.1Z" fill="#ddd5ca"/><path d="M305.9 350.5L326.2 364.6L354.1 358.9L352.6 346.1L326.6 319.1Z" fill="url(#h135_2)"/><path d="M368.2 318.9L352.6 346.1L354.1 358.9L360.6 364.3L389.1 351.2L390.6 319.8Z" fill="url(#h90_0)"/><path d="M390.6 319.8L389.1 351.2L406.2 356.7L422 349.6L428.3 332.4L392.7 318.2Z" fill="url(#h120_0)"/><path d="M455.8 332.4L436.4 326.2L428.3 332.4L422 349.6L435.7 367.6L458.6 360.1Z" fill="#e2dad0"/><path d="M455.8 332.4L436.4 326.2L428.3 332.4L422 349.6L435.7 367.6L458.6 360.1Z" fill="url(#h90_0)"/><path d="M498.4 329.8L493.2 325.7L485.1 322.9L455.8 332.4L458.6 360.1L461.2 362.1L504.7 350.1Z" fill="#e2dad0"/><path d="M498.4 329.8L493.2 325.7L485.1 322.9L455.8 332.4L458.6 360.1L461.2 362.1L504.7 350.1Z" fill="url(#h15_0)"/><path d="M527.2 361.8L547.4 348.5L558.1 325.4L540 305.8L536.5 304.9L498.4 329.8L504.7 350.1L508.6 355.9Z" fill="url(#h90_0)"/><path d="M547.4 348.5L586.4 372.5L596.6 364.4L581.5 322.7L558.1 325.4Z" fill="#ddd5ca"/><path d="M547.4 348.5L586.4 372.5L596.6 364.4L581.5 322.7L558.1 325.4Z" fill="url(#h30_2)"/><path d="M613.5 354.1L618.9 319.5L599.4 313.8L586.8 316.7L581.5 322.7L596.6 364.4L599 364.3Z" fill="url(#h165_0)"/><path d="M654 337.8L654.4 334.8L641.9 314L618.9 319.5L613.5 354.1L641.8 351.7Z" fill="url(#h60_0)"/><path d="M684.6 325.7L654.4 334.8L654 337.8L677 364.6L692.5 352.6Z" fill="url(#h150_0)"/><path d="M809.3 325L826.3 354.3L830 356.2L830 316Z" fill="url(#h60_1)"/><path d="M2.4 410.7L4.7 399.4L3.2 380.9L0 379.7L0 413.1Z" fill="url(#h45_1)"/><path d="M18.4 362.4L3.2 380.9L4.7 399.4L43.4 393L45.3 375.3L18.7 362.3Z" fill="url(#h15_0)"/><path d="M82 390.6L77.3 371.4L68.4 366.9L45.3 375.3L43.4 393L48.1 403.1L76.3 407.1Z" fill="#e2dad0"/><path d="M82 390.6L77.3 371.4L68.4 366.9L45.3 375.3L43.4 393L48.1 403.1L76.3 407.1Z" fill="url(#h135_1)"/><path d="M124.7 385L113 362.3L98.9 357.8L77.3 371.4L82 390.6L110.7 393.2Z" fill="#e2dad0"/><path d="M124.7 385L113 362.3L98.9 357.8L77.3 371.4L82 390.6L110.7 393.2Z" fill="url(#h45_2)"/><path d="M157.2 351.5L147.9 339.6L141.6 339.3L113 362.3L124.7 385L141.8 390.5L144.6 389Z" fill="url(#h45_0)"/><path d="M190.2 361.5L184.9 355.5L157.2 351.5L144.6 389L184 400.1Z" fill="url(#h150_1)"/><path d="M188.1 406.4L220.8 401.7L227.4 386.5L207.5 362.4L190.2 361.5L184 400.1Z" fill="url(#h30_1)"/><path d="M249.6 375.3L247.5 368.4L226.7 345.1L207.5 362.4L227.4 386.5Z" fill="url(#h105_1)"/><path d="M276.1 396.9L284.8 401.3L299.8 350.4L284 341.2L260.9 379.4Z" fill="#e2dad0"/><path d="M276.1 396.9L284.8 401.3L299.8 350.4L284 341.2L260.9 379.4Z" fill="url(#h15_0)"/><path d="M285.2 401.7L315.6 391.9L326.2 364.6L305.9 350.5L299.8 350.4L284.8 401.3Z" fill="#e2dad0"/><path d="M285.2 401.7L315.6 391.9L326.2 364.6L305.9 350.5L299.8 350.4L284.8 401.3Z" fill="url(#h45_1)"/><path d="M315.6 391.9L328 399.9L363.9 376.9L360.6 364.3L354.1 358.9L326.2 364.6Z" fill="url(#h15_1)"/><path d="M360.6 364.3L363.9 376.9L375.2 396.2L398.3 403.5L404.2 400L406.2 356.7L389.1 351.2Z" fill="#e2dad0"/><path d="M360.6 364.3L363.9 376.9L375.2 396.2L398.3 403.5L404.2 400L406.2 356.7L389.1 351.2Z" fill="url(#h0_1)"/><path d="M422 349.6L406.2 356.7L404.2 400L433.2 397.2L435.7 367.6Z" fill="#e2dad0"/><path d="M422 349.6L406.2 356.7L404.2 400L433.2 397.2L435.7 367.6Z" fill="url(#h105_1)"/><path d="M461.2 362.1L458.6 360.1L435.7 367.6L433.2 397.2L436.6 399.1L464.4 388.1L467.9 385.3Z" fill="#e2dad0"/><path d="M461.2 362.1L458.6 360.1L435.7 367.6L433.2 397.2L436.6 399.1L464.4 388.1L467.9 385.3Z" fill="url(#h30_0)"/><path d="M504.7 350.1L461.2 362.1L467.9 385.3L490.1 386.4L508.6 355.9Z" fill="url(#h105_2)"/><path d="M490.1 386.4L498.5 411.2L543.3 396.6L527.2 361.8L508.6 355.9Z" fill="url(#h0_0)"/><path d="M547.5 399.6L576.9 391.9L586.4 372.5L547.4 348.5L527.2 361.8L543.3 396.6Z" fill="#e2dad0"/><path d="M547.5 399.6L576.9 391.9L586.4 372.5L547.4 348.5L527.2 361.8L543.3 396.6Z" fill="url(#h165_2)"/><path d="M630.5 391.3L599 364.3L596.6 364.4L586.4 372.5L576.9 391.9L585.8 403L611.7 410Z" fill="#ddd5ca"/><path d="M630.5 391.3L599 364.3L596.6 364.4L586.4 372.5L576.9 391.9L585.8 403L611.7 410Z" fill="url(#h75_1)"/><path d="M643.9 391.3L641.8 351.7L613.5 354.1L599 364.3L630.5 391.3Z" fill="url(#h150_0)"/><path d="M648 393.6L675.9 395.8L677 395.2L677 364.6L654 337.8L641.8 351.7L643.9 391.3Z" fill="url(#h75_2)"/><path d="M2.4 410.7L35.1 421.8L48.1 403.1L43.4 393L4.7 399.4Z" fill="#e2dad0"/><path d="M2.4 410.7L35.1 421.8L48.1 403.1L43.4 393L4.7 399.4Z" fill="url(#h30_1)"/><path d="M110.7 393.2L82 390.6L76.3 407.1L82.7 431.1L108.7 429.5Z" fill="url(#h30_0)"/><path d="M141.8 390.5L124.7 385L110.7 393.2L108.7 429.5L117.8 432.4L136.7 424.2L136.8 424.1Z" fill="url(#h15_1)"/><path d="M144.6 389L141.8 390.5L136.8 424.1L182.3 431.7L188.1 406.4L184 400.1Z" fill="#e2dad0"/><path d="M144.6 389L141.8 390.5L136.8 424.1L182.3 431.7L188.1 406.4L184 400.1Z" fill="url(#h45_1)"/><path d="M182.3 431.7L185 440.5L213.1 440.4L230.3 414.5L220.8 401.7L188.1 406.4Z" fill="#e2dad0"/><path d="M182.3 431.7L185 440.5L213.1 440.4L230.3 414.5L220.8 401.7L188.1 406.4Z" fill="url(#h105_0)"/><path d="M230.3 414.5L236.2 417.3L276.1 396.9L260.9 379.4L249.6 375.3L227.4 386.5L220.8 401.7Z" fill="#e2dad0"/><path d="M230.3 414.5L236.2 417.3L276.1 396.9L260.9 379.4L249.6 375.3L227.4 386.5L220.8 401.7Z" fill="url(#h15_2)"/><path d="M286.9 416.2L285.2 401.7L284.8 401.3L276.1 396.9L236.2 417.3L250.2 442.9L280 430.9Z" fill="#e2dad0"/><path d="M286.9 416.2L285.2 401.7L284.8 401.3L276.1 396.9L236.2 417.3L250.2 442.9L280 430.9Z" fill="url(#h45_0)"/><path d="M342.7 427.2L328 399.9L315.6 391.9L285.2 401.7L286.9 416.2L332 438.3L339.8 433.7Z" fill="url(#h15_0)"/><path d="M352.6 420.5L375.2 396.2L363.9 376.9L328 399.9L342.7 427.2Z" fill="url(#h15_0)"/><path d="M399.2 425.1L398.3 403.5L375.2 396.2L352.6 420.5L389.6 441Z" fill="url(#h15_1)"/><path d="M433.2 397.2L404.2 400L398.3 403.5L399.2 425.1L432.7 446.6L446.1 420.1L436.6 399.1Z" fill="url(#h30_2)"/><path d="M436.6 399.1L446.1 420.1L475.8 427.7L464.4 388.1Z" fill="#e2dad0"/><path d="M436.6 399.1L446.1 420.1L475.8 427.7L464.4 388.1Z" fill="url(#h15_1)"/><path d="M464.4 388.1L475.8 427.7L482.7 431.1L493.3 427L498.5 411.2L490.1 386.4L467.9 385.3Z" fill="url(#h0_1)"/><path d="M493.3 427L497 429.7L546.7 430.9L547.5 399.6L543.3 396.6L498.5 411.2Z" fill="#ddd5ca"/><path d="M493.3 427L497 429.7L546.7 430.9L547.5 399.6L543.3 396.6L498.5 411.2Z" fill="url(#h75_1)"/><path d="M136.8 424.1L136.7 424.2L152.6 461.9L183.9 445.5L185 440.5L182.3 431.7Z" fill="url(#h30_0)"/><path d="M216.1 472.2L235.4 457.9L213.1 440.4L185 440.5L183.9 445.5L190.5 463.4Z" fill="url(#h30_1)"/><path d="M239 457.8L246.3 451.3L250.2 442.9L236.2 417.3L230.3 414.5L213.1 440.4L235.4 457.9Z" fill="#e2dad0"/><path d="M239 457.8L246.3 451.3L250.2 442.9L236.2 417.3L230.3 414.5L213.1 440.4L235.4 457.9Z" fill="url(#h45_0)"/><path d="M280 430.9L250.2 442.9L246.3 451.3L280.5 473L291.3 461Z" fill="url(#h105_2)"/><path d="M332 438.3L286.9 416.2L280 430.9L291.3 461L320 464.1Z" fill="url(#h135_1)"/><path d="M367.4 456.9L339.8 433.7L332 438.3L320 464.1L326.3 480L336.2 480Z" fill="#e2dad0"/><path d="M367.4 456.9L339.8 433.7L332 438.3L320 464.1L326.3 480L336.2 480Z" fill="url(#h45_1)"/><path d="M367.4 456.9L375 459.7L385.8 453.9L389.6 441L352.6 420.5L342.7 427.2L339.8 433.7Z" fill="url(#h15_0)"/><path d="M430.4 471.4L435.3 464.6L432.7 446.6L399.2 425.1L389.6 441L385.8 453.9L416.5 471.6Z" fill="url(#h0_1)"/><path d="M446.1 420.1L432.7 446.6L435.3 464.6L468.3 461.4L470.5 460.5L482.7 431.1L475.8 427.7Z" fill="#ddd5ca"/><path d="M446.1 420.1L432.7 446.6L435.3 464.6L468.3 461.4L470.5 460.5L482.7 431.1L475.8 427.7Z" fill="url(#h135_0)"/><path d="M216.1 472.2L190.5 463.4L185.3 480L216.5 480Z" fill="#e2dad0"/><path d="M216.1 472.2L190.5 463.4L185.3 480L216.5 480Z" fill="url(#h165_1)"/><path d="M216.5 480L246.4 480L239 457.8L235.4 457.9L216.1 472.2Z" fill="url(#h120_1)"/><path d="M280.5 473L246.3 451.3L239 457.8L246.4 480L278.7 480Z" fill="url(#h30_1)"/><path d="M320 464.1L291.3 461L280.5 473L278.7 480L326.3 480Z" fill="#e2dad0"/><path d="M320 464.1L291.3 461L280.5 473L278.7 480L326.3 480Z" fill="url(#h120_0)"/><path d="M375 459.7L367.4 456.9L336.2 480L373.6 480Z" fill="#e2dad0"/><path d="M375 459.7L367.4 456.9L336.2 480L373.6 480Z" fill="url(#h30_1)"/><path d="M416.5 471.6L385.8 453.9L375 459.7L373.6 480L407.6 480Z" fill="#ddd5ca"/><path d="M416.5 471.6L385.8 453.9L375 459.7L373.6 480L407.6 480Z" fill="url(#h105_2)"/><path d="M407.6 480L432.4 480L430.4 471.4L416.5 471.6Z" fill="url(#h30_1)"/><path d="M468.3 461.4L435.3 464.6L430.4 471.4L432.4 480L466.5 480Z" fill="#ddd5ca"/><path d="M468.3 461.4L435.3 464.6L430.4 471.4L432.4 480L466.5 480Z" fill="url(#h0_0)"/></g>
<path d="M-3.3 32.7L-102.5 57.1M-3.3 32.7L-2.1 33.6M-2.1 33.6L-9.3 61.6M-102.5 57.1L-9.3 61.6M876.7 -10.1L774.8 -875.1M-9.3 61.6L10.8 78M10.8 78L-12 106.2M-12 106.2L-318 73.4M-13.3 -1.8L-1096.3 55M-13.3 -1.8L-3.3 32.7M832.6 -13.8L834.2 -12.3M832.6 -13.8L803.3 -83.4M876.7 -10.1L858 -0.7M858 -0.7L834.2 -12.3M815 252.8L819.9 245.7M815 252.8L839.5 280.1M819.9 245.7L854.3 242.5M856.6 253.3L854.3 242.5M856.6 253.3L847.6 283.2M839.5 280.1L847.6 283.2M0.6 -11.1L-13.3 -1.8M20.4 251.7L-13.5 245.8M20.4 251.7L21.1 258.1M21.1 258.1L-13.2 295.9M-13.5 245.8L-57.5 269.9M-57.5 269.9L-13.2 295.9M21.1 258.1L36.2 289.2M-13.2 295.9L-6.1 304.8M-6.1 304.8L36.2 289.2M-1.2 492.7L1.5 501M1.5 501L34.9 529.1M863.1 512L872.7 464.5M863.1 512L836.4 508M836.4 508L829.6 499.6M872.7 464.5L864.4 462.8M829.6 499.6L830.9 492.8M864.4 462.8L830.9 492.8M144.2 291.9L152.8 328.2M144.2 291.9L172.4 284.9M152.8 328.2L185.7 309.4M185.7 309.4L178.1 287.6M172.4 284.9L178.1 287.6M0.6 -11.1L27.6 -2.7M-2.1 33.6L21.1 36.7M21.1 36.7L27.6 -2.7M826.3 354.3L794.7 376.3M826.3 354.3L833 357.7M833 357.7L829.3 386M829.3 386L811.8 397.4M794.7 376.3L801.7 396.6M801.7 396.6L811.8 397.4M781.8 366.1L794.7 376.3M781.8 366.1L754.7 376.3M754.7 376.3L751.6 383.9M751.6 383.9L788.4 413.2M788.4 413.2L801.7 396.6M809.3 325L796.2 320.8M809.3 325L826.3 354.3M781.8 366.1L784.7 326.6M784.7 326.6L796.2 320.8M864.4 512.7L863.1 512M836.4 508L758.9 1099.2M521.7 3.7L503.8 -2.8M521.7 3.7L546.8 -12.3M546.8 -12.3L479 -253.3M503.1 -4.1L476.5 -213.9M503.1 -4.1L503.8 -2.8M565.5 -6.7L576 2.9M565.5 -6.7L546.8 -12.3M534.8 35.4L521.7 3.7M534.8 35.4L568.4 20.5M568.4 20.5L576 2.9M650 -421.2L565.5 -6.7M448.2 -66.5L461.9 -4.8M461.9 -4.8L503.1 -4.1M461.9 -4.8L455.2 9.4M455.2 9.4L459.8 27.4M503.8 -2.8L484.9 28.6M484.9 28.6L459.8 27.4M-4.4 202L-5.3 187.4M-4.4 202L27.1 216M31.2 174.9L1.6 180.5M31.2 174.9L32.1 211.7M1.6 180.5L-5.3 187.4M32.1 211.7L27.1 216M-12.2 210.8L-4.4 202M-12.2 210.8L-3673 3.9M-50.8 163.4L-5.3 187.4M24.9 246.8L27.1 216M24.9 246.8L20.4 251.7M-12.2 210.8L-13.5 245.8M-0.2 142.4L-50.8 163.4M-0.2 142.4L1.6 180.5M328 399.9L342.7 427.2M328 399.9L363.9 376.9M363.9 376.9L375.2 396.2M375.2 396.2L352.6 420.5M352.6 420.5L342.7 427.2M399.2 425.1L398.3 403.5M399.2 425.1L389.6 441M398.3 403.5L375.2 396.2M352.6 420.5L389.6 441M-3.3 417.9L-1.6 414.7M-3.3 417.9L-97.8 445M-1.6 414.7L-90.1 360.9M4.3 469.6L4.5 469.4M4.3 469.6L-97.8 445M4.5 469.4L-3.3 417.9M-1.2 492.7L4.3 469.6M829.6 499.6L805.5 503.9M805.5 503.9L790.2 520.7M796.4 464L772.2 434.7M796.4 464L816.1 460.5M824.1 443L816.1 460.5M824.1 443L786.1 422M786.1 422L772.2 434.7M830.9 492.8L816.1 460.5M805.5 503.9L786.7 480.3M786.7 480.3L796.4 464M864.4 462.8L840.9 434.2M840.9 434.2L824.1 443M788.4 413.2L786.1 422M840.9 434.2L842.2 429.6M842.2 429.6L811.8 397.4M786.7 480.3L770.4 481.5M772.2 434.7L760 438.1M760 438.1L755.2 452.9M770.4 481.5L755.2 452.9M790.2 520.7L759.6 498.6M770.4 481.5L759.6 498.6M762.4 691.4L754.3 500.6M754.3 500.6L759.6 498.6M360.6 364.3L363.9 376.9M360.6 364.3L354.1 358.9M315.6 391.9L328 399.9M315.6 391.9L326.2 364.6M354.1 358.9L326.2 364.6M315.6 391.9L285.2 401.7M326.2 364.6L305.9 350.5M305.9 350.5L299.8 350.4M285.2 401.7L284.8 401.3M299.8 350.4L284.8 401.3M185.7 309.4L198.2 318.3M178.1 287.6L201.5 272.2M198.2 318.3L219 316.2M219 316.2L223.1 287.8M201.5 272.2L223.1 287.8M248.5 322.9L249.7 277.4M248.5 322.9L229.9 324.6M249.7 277.4L243.5 275.2M219 316.2L229.9 324.6M223.1 287.8L243.5 275.2M71.5 192.1L73 187.3M71.5 192.1L73.9 206.2M73 187.3L98.9 162.7M117.5 177L98.9 162.7M117.5 177L105.8 205.3M105.8 205.3L73.9 206.2M33 173L71.5 192.1M33 173L31.2 174.9M32.1 211.7L72.9 207.7M72.9 207.7L73.9 206.2M754.7 376.3L739.2 349.7M739.2 349.7L759 324.2M784.7 326.6L762.6 322.4M759 324.2L762.6 322.4M809.3 325L838.8 312.2M839.5 280.1L798.2 292.6M847.7 283.3L844.4 302.5M847.7 283.3L847.6 283.2M838.8 312.2L844.4 302.5M796.2 320.8L797.5 294.6M798.2 292.6L797.5 294.6M815 252.8L792.9 258.9M798.2 292.6L792.9 258.9M754.8 296.5L762.6 322.4M754.8 296.5L761.6 284.5M797.5 294.6L761.6 284.5M742.1 -88.4L721.2 -8.4M689.3 6L707.6 2.2M689.3 6L685.5 3.7M685.5 3.7L663.5 -98.9M721.2 -8.4L707.6 2.2M952.8 112.5L854 111.8M874.8 70.5L854 111.8M792.9 258.9L781.4 252.5M761.6 284.5L763.3 260.3M763.3 260.3L773.3 253.8M781.4 252.5L773.3 253.8M819.9 245.7L819.6 226.1M819.6 226.1L788.2 214.8M781.4 252.5L788.2 214.8M360.6 364.3L389.1 351.2M404.2 400L398.3 403.5M404.2 400L406.2 356.7M406.2 356.7L389.1 351.2M501.9 223.2L502.6 223.9M501.9 223.2L465.5 229.6M465.5 229.6L472.4 268.5M472.4 268.5L473.8 270.8M502.6 223.9L504 235.2M473.8 270.8L476.2 270.4M504 235.2L476.2 270.4M473.8 270.8L465.3 283.8M493.2 325.7L485.1 322.9M493.2 325.7L505.1 279.2M505.1 279.2L476.2 270.4M465.3 283.8L485.1 322.9M432.6 508L436 495.5M432.6 508L395.3 506.1M436 495.5L430.4 471.4M395.3 506.1L389.1 497.6M389.1 497.6L416.5 471.6M430.4 471.4L416.5 471.6M439 545.3L432.6 508M439 545.3L481.9 506.7M481.9 506.7L464.8 496.9M464.8 496.9L436 495.5M392.5 580.5L395.3 506.1M464.8 496.9L468.3 461.4M468.3 461.4L435.3 464.6M435.3 464.6L430.4 471.4M399.2 425.1L432.7 446.6M435.3 464.6L432.7 446.6M389.6 441L385.8 453.9M385.8 453.9L416.5 471.6M751.6 383.9L750.8 384.6M760 438.1L754.6 433.8M750.8 384.6L754.6 433.8M709.2 396.9L677 395.2M709.2 396.9L716 353.1M677 395.2L677 364.6M677 364.6L692.5 352.6M692.5 352.6L716 353.1M739.2 349.7L719.7 349.2M719.7 349.2L716 353.1M750.8 384.6L710.6 397.8M710.6 397.8L709.2 396.9M654.4 334.8L654 337.8M654.4 334.8L684.6 325.7M654 337.8L677 364.6M684.6 325.7L692.5 352.6M581.4 499.9L594.7 503.4M581.4 499.9L573.3 505.9M524 676.9L573.3 505.9M615.2 522.7L594.7 503.4M581.4 499.9L576.7 473.3M573.3 505.9L539.9 502M522.3 470L539.9 502M522.3 470L546.4 454.3M576.7 473.3L546.4 454.3M470.5 460.5L468.3 461.4M470.5 460.5L482.7 431.1M446.1 420.1L432.7 446.6M446.1 420.1L475.8 427.7M482.7 431.1L475.8 427.7M321.8 8.8L324.5 7.9M321.8 8.8L307 40.6M324.5 7.9L347.8 59.4M307 40.6L320 66.9M320 66.9L346.7 64.2M347.8 59.4L347.5 63.1M346.7 64.2L347.5 63.1M337.9 -1.5L356.3 1.3M337.9 -1.5L324.5 7.9M356.3 1.3L366.3 20.6M366.3 20.6L347.8 59.4M366.3 20.6L388.5 33.4M390.4 57.1L388.5 33.4M390.4 57.1L347.5 63.1M236.7 254.6L243.5 275.2M236.7 254.6L213 239.9M201.5 272.2L204.5 244.1M204.5 244.1L210.9 240M213 239.9L210.9 240M251.9 243.1L279.6 248.6M251.9 243.1L247.9 209.2M247.9 209.2L249.7 205.5M249.7 205.5L287.3 238M279.6 248.6L287.3 238M275.5 276.8L249.7 277.4M275.5 276.8L279.6 248.6M236.7 254.6L251.9 243.1M213 239.9L247.9 209.2M431.8 245.8L439 223.4M431.8 245.8L422.9 256.3M439 223.4L389 221.5M422.9 256.3L406.6 259.7M389 221.5L399.1 255.1M406.6 259.7L399.1 255.1M465.5 229.6L444.6 218.8M472.4 268.5L431.8 245.8M444.6 218.8L443.1 218.6M443.1 218.6L439 223.4M444 289.3L465.3 283.8M444 289.3L422.9 256.3M400.3 292.5L435.3 300.9M400.3 292.5L406.6 259.7M444 289.3L435.3 300.9M4.5 469.4L21.9 466.9M-1.6 414.7L2.4 410.7M2.4 410.7L35.1 421.8M35.1 421.8L40 431.2M40 431.2L21.9 466.9M34.9 529.1L43.5 518.1M43.5 518.1L48.1 476.5M21.9 466.9L48.1 476.5M43.5 518.1L81.4 509.6M81.4 509.6L93.2 533.1M72.2 470.5L48.1 476.5M72.2 470.5L83.7 494.5M81.4 509.6L83.7 494.5M254.5 501.1L268.8 578.9M254.5 501.1L253.3 500.4M207.9 545.2L216.2 503M216.2 503L217.6 501.9M253.3 500.4L217.6 501.9M254.5 501.1L276.2 489.1M268.8 578.9L307.1 505.4M276.2 489.1L307.1 505.4M710.6 397.8L719.6 421.1M677 395.2L675.9 395.8M675.9 395.8L671.4 440.2M671.4 440.2L677.2 445.5M677.2 445.5L719.6 421.1M754.6 433.8L721 422.9M719.6 421.1L721 422.9M320.7 274.3L339 296.4M320.7 274.3L284.7 287.5M285.3 306.6L284.7 287.5M285.3 306.6L326.2 316.4M339 296.4L326.2 316.4M354.1 358.9L352.6 346.1M305.9 350.5L326.6 319.1M352.6 346.1L326.6 319.1M274.3 325.2L262.8 326.2M274.3 325.2L284 341.2M262.8 326.2L247.5 368.4M284 341.2L260.9 379.4M260.9 379.4L249.6 375.3M247.5 368.4L249.6 375.3M285.3 306.6L274.3 325.2M248.5 322.9L262.8 326.2M284.7 287.5L275.5 276.8M299.8 350.4L284 341.2M326.2 316.4L326.6 319.1M229.9 324.6L226.7 345.1M226.7 345.1L247.5 368.4M284.8 401.3L276.1 396.9M276.1 396.9L260.9 379.4M246.3 451.3L250.2 442.9M246.3 451.3L280.5 473M250.2 442.9L280 430.9M280 430.9L291.3 461M280.5 473L291.3 461M239 457.8L253.3 500.4M239 457.8L246.3 451.3M276.2 489.1L280.5 473M236.2 417.3L276.1 396.9M236.2 417.3L250.2 442.9M286.9 416.2L285.2 401.7M286.9 416.2L280 430.9M236.2 417.3L230.3 414.5M230.3 414.5L213.1 440.4M239 457.8L235.4 457.9M213.1 440.4L235.4 457.9M217.6 501.9L216.1 472.2M235.4 457.9L216.1 472.2M172.4 284.9L162.9 245.5M204.5 244.1L174 238.9M162.9 245.5L174 238.9M144.2 291.9L139.1 289.8M139.1 247.4L139.1 289.8M139.1 247.4L145.1 243.9M162.9 245.5L145.1 243.9M139.1 247.4L114.5 247M114.5 247L109.9 209.2M109.9 209.2L140 211M145.1 243.9L140 211M100.1 268L101 255.7M100.1 268L65.7 288.7M101 255.7L73.2 239.2M65.7 288.7L61 286.9M61 286.9L62.1 246.9M62.1 246.9L73.2 239.2M139.1 289.8L115.9 295M115.9 295L100.1 268M114.5 247L101 255.7M105.9 315.1L115.9 295M105.9 315.1L97 319.5M84.2 317.5L97 319.5M84.2 317.5L65.7 288.7M109.9 209.2L105.8 205.3M72.9 207.7L73.2 239.2M24.9 246.8L62.1 246.9M39.6 291.4L36.2 289.2M39.6 291.4L61 286.9M73 187.3L62.8 153.6M98.9 162.7L94.7 142.8M94.7 142.8L78.3 136.3M78.3 136.3L62.8 153.6M33 173L35.9 157.7M62.8 153.6L35.9 157.7M27.6 -2.7L32.8 -4.4M32.8 -4.4L86.5 -201.4M32.8 -4.4L60.9 4.9M60.9 4.9L87.4 -128.3M842.2 429.6L856.6 414.7M829.3 386L861.6 399.2M856.6 414.7L861.6 399.2M856.6 414.7L935.5 460.4M833 357.7L857.5 354.9M857.5 354.9L864.2 396.5M861.6 399.2L864.2 396.5M864.4 512.7L940.9 461M710.2 321.6L693.2 317.5M710.2 321.6L721.2 312.4M721.2 312.4L725.6 286.4M685.6 295L724.7 284.6M685.6 295L693.2 317.5M724.7 284.6L725.6 286.4M719.7 349.2L710.2 321.6M684.6 325.7L693.2 317.5M759 324.2L721.2 312.4M754.8 296.5L725.6 286.4M676.5 286L680.1 267.8M676.5 286L685.6 295M724.5 258.4L720.3 253.5M724.5 258.4L724.7 284.6M680.1 267.8L720.3 253.5M676.5 286L655.4 294.3M654.4 334.8L641.9 314M641.9 314L643.7 306.7M655.4 294.3L643.7 306.7M724.5 258.4L763.3 260.3M664.8 247.9L679 226.6M664.8 247.9L643.6 246.3M643.6 246.3L635.2 226.3M678.3 225L642.9 200.8M678.3 225L679 226.6M635.2 226.3L642.9 200.8M680.1 267.8L664.8 247.9M636.5 255.4L655.4 294.3M636.5 255.4L643.6 246.3M681.1 191.8L643.9 186.7M681.1 191.8L678.3 225M642.9 200.8L642 189.2M643.9 186.7L642 189.2M620.4 282.5L624.1 261.9M620.4 282.5L609.3 287.3M609.3 287.3L574 267.4M624.1 261.9L589.6 250.1M589.6 250.1L575.8 256.9M575.8 256.9L573.3 259.8M573.3 259.8L574 267.4M636.5 255.4L624.1 261.9M643.7 306.7L620.4 282.5M618.9 319.5L641.9 314M618.9 319.5L599.4 313.8M599.4 313.8L609.3 287.3M599.4 313.8L586.8 316.7M573.4 270.3L586.8 316.7M573.4 270.3L574 267.4M601.7 226.2L635.2 226.3M601.7 226.2L589.6 250.1M547 207.7L562.2 204.5M547 207.7L537.1 219.8M562.2 204.5L575.8 256.9M548.4 254.5L537.1 219.8M548.4 254.5L573.3 259.8M854.3 242.5L864.4 217M864.4 217L859.2 211.2M819.6 226.1L834.6 209.4M859.2 211.2L834.6 209.4M613.5 354.1L641.8 351.7M613.5 354.1L599 364.3M599 364.3L630.5 391.3M641.8 351.7L643.9 391.3M643.9 391.3L630.5 391.3M654 337.8L641.8 351.7M618.9 319.5L613.5 354.1M586.8 316.7L581.5 322.7M596.6 364.4L581.5 322.7M596.6 364.4L599 364.3M648 393.6L675.9 395.8M648 393.6L643.9 391.3M576.9 391.9L586.4 372.5M576.9 391.9L585.8 403M596.6 364.4L586.4 372.5M630.5 391.3L611.7 410M585.8 403L611.7 410M586.4 372.5L547.4 348.5M581.5 322.7L558.1 325.4M547.4 348.5L558.1 325.4M573.4 270.3L540 305.8M558.1 325.4L540 305.8M404.2 400L433.2 397.2M446.1 420.1L436.6 399.1M433.2 397.2L436.6 399.1M475.8 427.7L464.4 388.1M436.6 399.1L464.4 388.1M530.3 293.8L508.7 278.2M530.3 293.8L544.5 256M508.7 278.2L520.3 256.3M544.5 256L520.3 256.3M493.2 325.7L498.4 329.8M505.1 279.2L508.7 278.2M498.4 329.8L536.5 304.9M536.5 304.9L530.3 293.8M548.4 254.5L544.5 256M536.5 304.9L540 305.8M504 235.2L520.3 256.3M502.6 223.9L537.1 219.8M455.8 332.4L436.4 326.2M455.8 332.4L458.6 360.1M422 349.6L428.3 332.4M422 349.6L435.7 367.6M428.3 332.4L436.4 326.2M435.7 367.6L458.6 360.1M435.3 300.9L436.4 326.2M485.1 322.9L455.8 332.4M406.2 356.7L422 349.6M433.2 397.2L435.7 367.6M648 393.6L634.6 438.3M671.4 440.2L643 445.5M634.6 438.3L643 445.5M488.3 506L494.2 495.5M488.3 506L512.5 549.6M494.2 495.5L532.3 509.8M512.5 549.6L532.3 509.8M481.9 506.7L488.3 506M470.5 460.5L498 482.8M498 482.8L494.2 495.5M498 482.8L520.9 469.9M520.9 469.9L522.3 470M539.9 502L532.3 509.8M678.6 448.1L677.2 445.5M678.6 448.1L655.9 486.5M643 445.5L638.6 474.5M638.6 474.5L650.2 486.4M655.9 486.5L650.2 486.4M615.2 522.7L637.5 515M594.7 503.4L624.4 476.7M624.4 476.7L638.6 474.5M650.2 486.4L637.5 515M667 533.7L637.5 515M576.9 391.9L547.5 399.6M547.8 433.4L584.4 432M547.8 433.4L546.7 430.9M585.8 403L584.4 432M547.5 399.6L546.7 430.9M520.9 469.9L497 429.7M547.8 433.4L546.4 454.3M546.7 430.9L497 429.7M482.7 431.1L493.3 427M497 429.7L493.3 427M409.8 -3.6L392.5 30.4M409.8 -3.6L416.3 -4.5M416.3 -4.5L417.2 -3.6M417.2 -3.6L425.5 29.9M392.5 30.4L423.1 32.8M425.5 29.9L423.1 32.8M448.2 -66.5L416.3 -4.5M455.2 9.4L417.2 -3.6M457 30.7L459.8 27.4M457 30.7L425.5 29.9M381.5 -67.3L367.9 -7.1M381.5 -67.3L403.6 -6M403.6 -6L367.9 -7.1M409.8 -3.6L403.6 -6M356.3 1.3L367.9 -7.1M388.5 33.4L392.5 30.4M316.3 71.3L333.3 117.1M316.3 71.3L320 66.9M346.7 64.2L360.6 101.8M360.6 101.8L333.3 117.1M316.3 71.3L297.2 81.9M297.2 81.9L297.9 93.4M297.9 93.4L322.7 130.1M333.3 117.1L322.7 130.1M390.4 57.1L392.6 59.3M423.1 32.8L419.3 65.2M419.3 65.2L392.6 59.3M586.6 110.2L597.5 110.7M586.6 110.2L575.3 112.6M597.5 110.7L607.9 143.2M561.5 144L561.1 143.3M561.5 144L603.4 148.7M603.4 148.7L607.9 143.2M575.3 112.6L561.1 143.3M566.6 173.3L529 171.8M566.6 173.3L561.5 144M529 171.8L548.3 141.9M548.3 141.9L561.1 143.3M466.9 135.5L472.6 92.8M466.9 135.5L490.9 145.9M472.6 92.8L499.6 111.2M499.6 111.2L490.9 145.9M534.8 35.4L531.3 46.3M484.9 28.6L496.4 45.4M496.4 45.4L531.3 46.3M568.4 20.5L576.3 36.7M569.8 63.9L576.3 36.7M569.8 63.9L541.3 70.8M531.3 46.3L541.3 70.8M468.5 173.4L478.6 192M468.5 173.4L491.3 146.5M516.9 175.8L505.2 154.4M516.9 175.8L498.6 199M498.6 199L478.6 192M505.2 154.4L491.3 146.5M444.7 171L468.5 173.4M444.7 171L433.8 196M433.8 196L443.1 218.6M444.6 218.8L478.6 192M436 150.9L440.4 138M436 150.9L444.7 171M466.9 135.5L440.4 138M490.9 145.9L491.3 146.5M518.3 176L529 171.8M518.3 176L516.9 175.8M548.3 141.9L533.2 131.7M533.2 131.7L505.2 154.4M501.9 223.2L498.6 199M547 207.7L518.3 176M258 189.1L249.6 194.3M258 189.1L261 146.8M249.6 194.3L227.7 183.6M226.7 182.4L218.7 143.6M226.7 182.4L227.7 183.6M261 146.8L260.4 146.4M260.4 146.4L218.8 143.5M218.8 143.5L218.7 143.6M205.1 213.7L210.9 240M205.1 213.7L227.7 183.6M249.7 205.5L249.6 194.3M187.9 155L218.7 143.6M187.9 155L180 185.5M180 185.5L226.7 182.4M278.4 116.2L291.4 139.8M278.4 116.2L262.9 107.9M291.4 139.8L261 146.8M262.9 107.9L254.5 116M254.5 116L260.4 146.4M217.1 123.4L254.5 116M217.1 123.4L218.8 143.5M105.9 315.1L141.6 339.3M152.8 328.2L147.9 339.6M141.6 339.3L147.9 339.6M72.2 470.5L74.4 466.7M40 431.2L77.2 438.5M77.2 438.5L74.4 466.7M-6.1 304.8L-4.3 319.5M39.6 291.4L38.2 325.1M38.2 325.1L-4.3 319.5M84.2 317.5L58.8 335.6M58.8 335.6L41.3 330.5M38.2 325.1L41.3 330.5M-58.6 357.5L-8.8 330.5M-8.8 330.5L-4.3 319.5M43.4 393L4.7 399.4M43.4 393L45.3 375.3M45.3 375.3L18.7 362.3M3.2 380.9L4.7 399.4M3.2 380.9L18.4 362.4M18.4 362.4L18.7 362.3M2.4 410.7L4.7 399.4M35.1 421.8L48.1 403.1M48.1 403.1L43.4 393M68.4 366.9L45.3 375.3M68.4 366.9L58.8 335.6M41.3 330.5L18.7 362.3M-58.6 357.5L3.2 380.9M-8.8 330.5L18.4 362.4M83.7 494.5L104 494.2M93.2 533.1L114.5 510.4M114.5 510.4L104 494.2M107.5 686.1L152 507.9M114.5 510.4L152 507.9M385.8 453.9L375 459.7M389.1 497.6L372.7 493.2M375 459.7L372.7 493.2M392.5 580.5L357 502.7M357 502.7L372.7 493.2M300.2 1702.8L334.3 501M357 502.7L334.3 501M307.1 505.4L330 497.8M334.3 501L330 497.8M682 451.1L710.9 463.6M682 451.1L679.9 496.2M710.9 463.6L719.2 477.3M719.2 477.3L717.5 495M679.9 496.2L681.7 497.6M681.7 497.6L716.4 496.3M717.5 495L716.4 496.3M678.6 448.1L682 451.1M721 422.9L710.9 463.6M655.9 486.5L679.9 496.2M755.2 452.9L719.2 477.3M754.3 500.6L717.5 495M667 533.7L681.7 497.6M722.6 714.7L716.4 496.3M364.1 283.7L353.2 295M364.1 283.7L399.1 293.5M353.2 295L368.2 318.9M368.2 318.9L390.6 319.8M399.1 293.5L392.7 318.2M390.6 319.8L392.7 318.2M400.3 292.5L399.1 293.5M366 263.4L364.1 283.7M366 263.4L399.1 255.1M339 296.4L353.2 295M352.6 346.1L368.2 318.9M389.1 351.2L390.6 319.8M428.3 332.4L392.7 318.2M174.4 197.2L173.9 198.1M174.4 197.2L175.2 189.7M173.9 198.1L140.2 210.7M175.2 189.7L143.3 166M140.2 210.7L134 173.3M143.3 166L134 173.3M205.1 213.7L174.4 197.2M174 238.9L173.9 198.1M180 185.5L175.2 189.7M140 211L140.2 210.7M187.9 155L180.1 149.9M180.1 149.9L146.2 144.9M146.2 144.9L143.3 166M117.5 177L134 173.3M146.2 144.9L141.9 133M94.7 142.8L106.4 136.3M141.9 133L106.4 136.3M-0.2 142.4L5.8 134.5M35.9 157.7L28.7 145.8M28.7 145.8L5.8 134.5M-12 106.2L4.6 129M4.6 129L5.8 134.5M60.9 4.9L68.5 11.8M87.4 -128.3L95.3 -3.3M68.5 11.8L95.3 -3.3M134.4 -11.4L89 -173.1M134.4 -11.4L115.2 3.6M115.2 3.6L95.3 -3.3M78.3 136.3L70.9 121.8M28.7 145.8L54.6 116.6M70.9 121.8L54.6 116.6M4.6 129L42.2 101.5M54.6 116.6L42.2 101.5M180.1 149.9L181.8 112.8M141.9 133L144.9 124.1M144.9 124.1L181.8 112.8M297.2 81.9L275.1 74.7M307 40.6L283.8 41.4M283.8 41.4L275.1 74.7M297.5 0.4L281.6 10.9M297.5 0.4L321.8 8.8M281.6 10.9L280.3 38M283.8 41.4L280.3 38M297.9 93.4L278.4 116.2M262.9 107.9L259.5 84.5M259.5 84.5L267.3 77M275.1 74.7L267.3 77M227.4 83.1L259.5 84.5M227.4 83.1L227.9 47.8M267.3 77L250.4 47M227.9 47.8L250.4 47M281.6 10.9L249.4 5.5M280.3 38L259.8 36.2M249.4 5.5L259.8 36.2M259.8 36.2L250.4 47M1087 373.6L861.3 351M876.3 317.9L860.9 343.1M860.9 343.1L861.3 351M864.2 396.5L1087 373.6M857.5 354.9L861.3 351M856.6 253.3L982.5 281.1M951.6 229.1L864.4 217M847.7 283.3L927.5 290.5M844.4 302.5L876.3 317.9M838.8 312.2L860.9 343.1M598.1 215L621.2 189.2M598.1 215L571.4 196M621.2 189.2L594.6 173.1M594.6 173.1L574.3 182.2M574.3 182.2L571.4 196M601.7 226.2L598.1 215M642 189.2L621.2 189.2M562.2 204.5L571.4 196M643.9 186.7L647.1 160.3M647.1 160.3L641.3 149.9M641.3 149.9L607.9 143.2M603.4 148.7L594.6 173.1M566.6 173.3L574.3 182.2M689.3 6L689.6 34M707.6 2.2L725.5 28.1M689.6 34L711.2 43.4M711.2 43.4L725.5 28.1M755.6 113.1L792.7 83.4M755.6 113.1L745.5 67.6M745.5 67.6L793.2 75.4M792.7 83.4L793.2 75.4M859.8 61L835.5 85.6M859.8 61L851.4 43.2M835.5 85.6L795 73.6M795 73.6L796.1 70.1M796.1 70.1L851.4 43.2M858 -0.7L850.3 37.5M834.2 -12.3L826.6 26.1M826.6 26.1L850.3 37.5M926.5 13.8L851.4 39.8M850.3 37.5L851.4 39.8M874.8 70.5L859.8 61M851.4 39.8L851.4 43.2M760.7 7.5L785.1 5.6M760.7 7.5L754.9 10.7M754.9 10.7L746.7 32.7M785.1 5.6L797.1 19.2M746.7 32.7L748.1 37.6M748.1 37.6L794.2 39M794.2 39L798.7 23.1M797.1 19.2L798.7 23.1M803.3 -83.4L785.1 5.6M742.1 -88.4L760.7 7.5M721.2 -8.4L754.9 10.7M725.5 28.1L746.7 32.7M832.6 -13.8L797.1 19.2M722.1 66.6L711.2 43.4M722.1 66.6L735.1 70.2M735.1 70.2L744.8 67.3M744.8 67.3L748.1 37.6M795 73.6L793.2 75.4M744.8 67.3L745.5 67.6M796.1 70.1L794.2 39M826.6 26.1L798.7 23.1M720.3 253.5L719 238.6M679 226.6L707.1 226.5M707.1 226.5L719 238.6M773.3 253.8L746.7 216.3M719 238.6L746.7 216.3M788.2 214.8L787.4 212.4M787.4 212.4L750.6 206.6M746.7 216.3L750.6 206.6M589.1 458.1L587.4 435.5M589.1 458.1L606.5 456.7M587.4 435.5L615.6 428.1M606.5 456.7L624.5 436.6M615.6 428.1L624.5 436.6M576.7 473.3L589.1 458.1M584.4 432L587.4 435.5M624.4 476.7L606.5 456.7M611.7 410L615.6 428.1M634.6 438.3L624.5 436.6M547.4 348.5L527.2 361.8M547.5 399.6L543.3 396.6M527.2 361.8L543.3 396.6M493.3 427L498.5 411.2M543.3 396.6L498.5 411.2M609.2 33.6L642.5 22.7M609.2 33.6L593 -0.1M593 -0.1L606.6 -11.6M606.6 -11.6L643.3 6.5M642.5 22.7L645.8 10M645.8 10L643.3 6.5M576 2.9L593 -0.1M576.3 36.7L605.7 42.9M605.7 42.9L609.2 33.6M648.4 -353L606.6 -11.6M663.5 -98.9L643.3 6.5M685.5 3.7L645.8 10M689.6 34L680.1 47.4M642.5 22.7L652.2 53.8M652.2 53.8L680.1 47.4M722.1 66.6L697.1 74.5M680.1 47.4L697.1 74.5M602.9 66.1L608.6 59.9M602.9 66.1L603.6 105M608.6 59.9L646.5 64.9M603.6 105L641.3 100.9M641.3 100.9L649.9 80.8M649.9 80.8L646.5 64.9M569.8 63.9L573 65.2M573 65.2L602.9 66.1M605.7 42.9L608.6 59.9M573 65.2L586.6 110.2M597.5 110.7L603.6 105M652.2 53.8L646.5 64.9M650.8 119.5L641.3 100.9M650.8 119.5L641.3 149.9M650.8 119.5L684.3 120.7M684.3 120.7L695.7 111.4M695.7 111.4L688.9 88.7M688.9 88.7L649.9 80.8M697.1 74.5L688.9 88.7M433.3 120.9L471.1 90.7M433.3 120.9L415.9 108M415.9 108L426.5 71.5M426.5 71.5L450.9 67.8M450.9 67.8L469.8 80.6M469.8 80.6L471.1 90.7M440.4 138L433.3 120.9M472.6 92.8L471.1 90.7M457 30.7L450.9 67.8M419.3 65.2L426.5 71.5M496.4 45.4L484.9 70.5M484.9 70.5L469.8 80.6M392.6 59.3L378.6 107.2M415.9 108L394 113M394 113L378.6 107.2M360.6 101.8L378 107.3M378 107.3L378.6 107.2M513 106.4L532 123.2M513 106.4L523.5 83.6M532 123.2L557.2 102.4M557.2 102.4L541.1 71.3M541.1 71.3L523.5 83.6M499.6 111.2L513 106.4M533.2 131.7L532 123.2M484.9 70.5L523.5 83.6M575.3 112.6L557.2 102.4M541.3 70.8L541.1 71.3M97 319.5L98.9 357.8M68.4 366.9L77.3 371.4M77.3 371.4L98.9 357.8M141.6 339.3L113 362.3M98.9 357.8L113 362.3M198.2 318.3L184.9 355.5M147.9 339.6L157.2 351.5M184.9 355.5L157.2 351.5M74.4 466.7L123.2 468.2M104 494.2L129.8 475.4M123.2 468.2L129.8 475.4M181 493.8L162.2 504.8M181 493.8L190.5 463.4M140 479.7L152.6 461.9M140 479.7L153.4 505.7M162.2 504.8L153.4 505.7M152.6 461.9L183.9 445.5M183.9 445.5L190.5 463.4M207.9 545.2L162.2 504.8M216.2 503L181 493.8M216.1 472.2L190.5 463.4M136.7 424.2L117.8 432.4M136.7 424.2L152.6 461.9M117.8 432.4L123.2 468.2M129.8 475.4L140 479.7M152 507.9L153.4 505.7M213.1 440.4L185 440.5M185 440.5L183.9 445.5M367.4 456.9L328.5 485.7M367.4 456.9L339.8 433.7M332 438.3L339.8 433.7M332 438.3L320 464.1M320 464.1L328.5 485.7M375 459.7L367.4 456.9M330 497.8L328.5 485.7M342.7 427.2L339.8 433.7M286.9 416.2L332 438.3M291.3 461L320 464.1M21.1 36.7L27.4 44.9M68.5 11.8L69.6 32.1M69.6 32.1L27.4 44.9M70.9 121.8L81.6 104.8M81.6 104.8L64.1 73.5M42.2 101.5L38.7 83M64.1 73.5L38.7 83M10.8 78L24.6 73.9M27.4 44.9L24.6 73.9M24.6 73.9L38.7 83M217.1 123.4L210.1 110.8M181.8 112.8L188.4 108.6M188.4 108.6L210.1 110.8M227.4 83.1L220.1 88.8M210.1 110.8L220.1 88.8M69.6 32.1L77.9 43.3M64.1 73.5L76.7 59.7M76.7 59.7L77.9 43.3M220.8 -0L187 -49.9M220.8 -0L229 4.2M229 4.2L241.9 -0.6M241.9 -0.6L267.8 -61.1M218 36.9L229 4.2M218 36.9L227.9 47.8M249.4 5.5L241.9 -0.6M297.5 0.4L267.8 -61.1M337.9 -1.5L280.1 -263.5M717 159.4L722.9 176.7M717 159.4L683.9 150.4M722.9 176.7L707.3 189.5M677.8 155.1L688.6 188.6M677.8 155.1L683.9 150.4M688.6 188.6L707.3 189.5M707.1 226.5L707.3 189.5M750.6 206.6L742.7 182.8M742.7 182.8L722.9 176.7M681.1 191.8L688.6 188.6M647.1 160.3L677.8 155.1M684.3 120.7L683.9 150.4M754.8 115.4L762.9 134.6M754.8 115.4L722.4 110.1M762.9 134.6L721.8 142.8M721.8 142.8L713.7 116M722.4 110.1L713.7 116M755.6 113.1L754.8 115.4M792.7 83.4L794.8 91.2M775.3 144.6L762.9 134.6M775.3 144.6L787.2 142.6M787.2 142.6L794.8 91.2M735.1 70.2L722.4 110.1M760.3 170.3L742.7 182.8M760.3 170.3L775.3 144.6M717 159.4L721.8 142.8M695.7 111.4L713.7 116M835.5 85.6L843.6 112.8M794.8 91.2L826.9 116.7M826.9 116.7L843.6 112.8M854 111.8L847.9 115M847.9 115L843.6 112.8M490.1 386.4L508.6 355.9M490.1 386.4L467.9 385.3M461.2 362.1L467.9 385.3M461.2 362.1L504.7 350.1M504.7 350.1L508.6 355.9M527.2 361.8L508.6 355.9M498.5 411.2L490.1 386.4M464.4 388.1L467.9 385.3M458.6 360.1L461.2 362.1M498.4 329.8L504.7 350.1M322.7 130.1L321.5 133.8M378 107.3L360.7 152.7M321.5 133.8L360.7 152.7M291.4 139.8L294 140.9M294 140.9L319.3 135.8M321.5 133.8L319.3 135.8M258 189.1L267.6 188.1M294 140.9L288.5 173.1M267.6 188.1L288.5 173.1M82 390.6L110.7 393.2M82 390.6L76.3 407.1M110.7 393.2L108.7 429.5M76.3 407.1L82.7 431.1M82.7 431.1L108.7 429.5M124.7 385L113 362.3M124.7 385L110.7 393.2M77.3 371.4L82 390.6M48.1 403.1L76.3 407.1M77.2 438.5L82.7 431.1M117.8 432.4L108.7 429.5M226.7 345.1L207.5 362.4M184.9 355.5L190.2 361.5M207.5 362.4L190.2 361.5M249.6 375.3L227.4 386.5M207.5 362.4L227.4 386.5M230.3 414.5L220.8 401.7M227.4 386.5L220.8 401.7M141.8 390.5L144.6 389M141.8 390.5L136.8 424.1M144.6 389L184 400.1M136.8 424.1L182.3 431.7M182.3 431.7L188.1 406.4M188.1 406.4L184 400.1M124.7 385L141.8 390.5M157.2 351.5L144.6 389M136.7 424.2L136.8 424.1M190.2 361.5L184 400.1M185 440.5L182.3 431.7M220.8 401.7L188.1 406.4M188.4 108.6L166.4 69.6M220.1 88.8L185.5 57.7M166.4 69.6L185.5 57.7M218 36.9L193.6 42M193.6 42L185.5 57.7M106.4 136.3L105.5 106.1M144.9 124.1L139.4 108.5M139.4 108.5L105.5 106.1M81.6 104.8L97.4 97.5M76.7 59.7L103.4 81M103.4 81L97.4 97.5M97.4 97.5L105.5 106.1M847.9 115L854.1 140.7M854.1 140.7L872.1 155.1M859.2 211.2L861.7 177.5M870.1 165.8L861.7 177.5M792.7 144.7L803.2 145.9M792.7 144.7L794.1 196.1M803.2 145.9L818.2 156.8M818.2 156.8L823.2 171.4M823.2 171.4L817.6 190.1M817.6 190.1L794.5 196.7M794.1 196.1L794.5 196.7M787.2 142.6L792.7 144.7M826.9 116.7L803.2 145.9M760.3 170.3L794.1 196.1M854.1 140.7L818.2 156.8M861.7 177.5L823.2 171.4M834.6 209.4L817.6 190.1M787.4 212.4L794.5 196.7M394 113L396.5 158M360.7 152.7L363.2 156.6M363.2 156.6L396.5 158M436 150.9L398 159.3M398 159.3L396.5 158M433.8 196L399.3 188.2M398 159.3L399.3 188.2M319.3 135.8L325.8 182.3M288.5 173.1L316 187.8M325.8 182.3L316 187.8M148.9 30.1L185.8 31.2M148.9 30.1L158.6 -4.8M158.6 -4.8L166.9 -7.9M166.9 -7.9L182.7 7.2M182.7 7.2L185.8 31.2M134.4 -11.4L158.6 -4.8M187 -49.9L166.9 -7.9M220.8 -0L182.7 7.2M193.6 42L185.8 31.2M139.5 82.6L116.8 76.8M139.5 82.6L155.1 68.7M116.8 76.8L113.1 38.2M155.1 68.7L142 37.4M142 37.4L120.9 32.3M120.9 32.3L113.1 38.2M139.4 108.5L139.5 82.6M103.4 81L116.8 76.8M166.4 69.6L155.1 68.7M77.9 43.3L113.1 38.2M148.9 30.1L142 37.4M115.2 3.6L120.9 32.3M357.9 172.2L394.9 192.5M357.9 172.2L345.6 188M345.6 188L353.9 206.2M353.9 206.2L375.3 215.4M394.9 192.5L382.1 214.6M382.1 214.6L375.3 215.4M363.2 156.6L357.9 172.2M399.3 188.2L394.9 192.5M325.8 182.3L345.6 188M389 221.5L382.1 214.6M366 263.4L357.7 253.2M357.7 253.2L375.3 215.4M300.3 211.6L308 205.4M300.3 211.6L294.6 234.8M308 205.4L337 221.9M294.6 234.8L325.7 249.7M337 221.9L329 248M325.7 249.7L329 248M267.6 188.1L300.3 211.6M316 187.8L308 205.4M287.3 238L294.6 234.8M353.9 206.2L337 221.9M320.7 274.3L325.7 249.7M357.7 253.2L329 248" stroke="#fff" stroke-width="1.4" fill="none" stroke-linecap="round"/>
<path d="M400 118C404.5 112.2 415.8 109 425 108C434.2 107 446.2 107.5 455 112C463.8 116.5 473.2 127 478 135C482.8 143 485.3 152.2 484 160C482.7 167.8 476.5 178.7 470 182C463.5 185.3 453.3 182.8 445 180C436.7 177.2 427.8 171.2 420 165C412.2 158.8 401.3 150.8 398 143C394.7 135.2 395.5 123.8 400 118Z" fill="#e9e2d9"/>
<path d="M706 200C706.5 192.8 718.5 169.7 730 160C741.5 150.3 757.3 140.3 775 142C792.7 143.7 825.8 155 836 170C846.2 185 847 225 836 232C825 239 788.2 216.8 770 212C751.8 207.2 737.7 205 727 203C716.3 201 705.5 207.2 706 200Z" fill="#e9e2d9"/>
<path d="M487 438C496.7 432.5 507.8 431.5 520 427C532.2 422.5 546.8 414 560 411C573.2 408 593 403 599 409C605 415 596 437.3 596 447C596 456.7 596.7 460.5 599 467C601.3 473.5 636.3 482.8 610 486C583.7 489.2 465.7 490.3 441 486C416.3 481.7 454.3 468 462 460C469.7 452 477.3 443.5 487 438Z" fill="#e9e2d9"/>
<path d="M130 5C135.3 0 145.8 -3.3 160 -5C174.2 -6.7 203 -9.2 215 -5C227 -0.8 230.3 11.7 232 20C233.7 28.3 232 39.2 225 45C218 50.8 202.5 55 190 55C177.5 55 160.3 50 150 45C139.7 40 131.3 31.7 128 25C124.7 18.3 124.7 10 130 5Z" fill="#e9e2d9"/>
<path d="M500 150C509.2 147.5 529.2 155.8 540 160C550.8 164.2 561.7 170.7 565 175C568.3 179.3 570.8 183.5 560 186C549.2 188.5 512.5 191.8 500 190C487.5 188.2 485 181.7 485 175C485 168.3 490.8 152.5 500 150Z" fill="#e9e2d9"/>
<path d="M130 5C135.3 0 145.8 -3.3 160 -5C174.2 -6.7 203 -9.2 215 -5C227 -0.8 230.3 11.7 232 20C233.7 28.3 232 39.2 225 45C218 50.8 202.5 55 190 55C177.5 55 160.3 50 150 45C139.7 40 131.3 31.7 128 25C124.7 18.3 124.7 10 130 5Z" fill="#dfe0cc" opacity=".55"/>
<path d="M356 302L392 300L412 330L398 358L374 368L358 340Z" fill="#e2dad0"/>
<path d="M374 382L408 374L422 395L404 408L382 404Z" fill="#e2dad0"/>
<path d="M250 128L262 120L268 150L255 160L246 148Z" fill="#e2dad0"/>
<path d="M352 172L372 156L392 150L412 170L436 196L420 222L398 240L368 222L350 200Z" fill="url(#gridA)"/>
<path d="M599 409L618 404L640 387L643 376L659 374L681 360L692 349L703 327L719 319L736 311L747 319L768 325L790 333L801 344L823 338L836 331L836 486L725 486L703 469L673 486L610 486L599 467L596 447Z" fill="#d1d5b9"/>
<clipPath id="hc"><path d="M599 409L618 404L640 387L643 376L659 374L681 360L692 349L703 327L719 319L736 311L747 319L768 325L790 333L801 344L823 338L836 331L836 486L725 486L703 469L673 486L610 486L599 467L596 447Z"/></clipPath>
<g clip-path="url(#hc)">
<path d="M735 438C742.2 432.7 755 429.7 765 430C775 430.3 789.2 430.7 795 440C800.8 449.3 810.8 478.3 800 486C789.2 493.7 743 490 730 486C717 482 721.2 470 722 462C722.8 454 727.8 443.3 735 438Z" fill="#dfe1c9" filter="url(#bl)"/>
<path d="M690 385C693.3 380.8 708.3 378.8 720 380C731.7 381.2 748.3 387 760 392C771.7 397 783.3 403.7 790 410C796.7 416.3 803.3 426.3 800 430C796.7 433.7 780 434 770 432C760 430 751.7 422.5 740 418C728.3 413.5 708.3 410.5 700 405C691.7 399.5 686.7 389.2 690 385Z" fill="#babfa2" filter="url(#bl)"/>
<path d="M752 360C755.7 356.2 767 353 772 355C777 357 781 365.3 782 372C783 378.7 781.3 391.7 778 395C774.7 398.3 766.7 394.8 762 392C757.3 389.2 751.7 383.3 750 378C748.3 372.7 748.3 363.8 752 360Z" fill="#babfa2" filter="url(#bl)"/>
<path d="M610 440C616.3 436.3 635 436 650 436C665 436 688 436.8 700 440C712 443.2 722 450.8 722 455C722 459.2 712 463.8 700 465C688 466.2 664.7 463.2 650 462C635.3 460.8 618.7 461.7 612 458C605.3 454.3 603.7 443.7 610 440Z" fill="#babfa2" filter="url(#bl)"/>
<path d="M792 400C797.8 395 822.7 388.3 830 395C837.3 401.7 839.3 431.7 836 440C832.7 448.3 816.8 447.5 810 445C803.2 442.5 798 432.5 795 425C792 417.5 786.2 405 792 400Z" fill="#babfa2" filter="url(#bl)"/>
<path d="M706 330L716 400L740 372L800 332M716 400L690 380M640 420L700 405L760 440L836 430M760 440L770 486M790 425L810 486M836 395L790 405L780 430M650 450L720 440L730 470" stroke="#eef0de" stroke-width=".8" fill="none" opacity=".8"/>
</g>
<rect x="516" y="-2.4" width="8.6" height="7.3" fill="#ebe2b4" transform="rotate(35 520.3 1.2)"/><rect x="635.7" y="-0.6" width="7.3" height="5.6" fill="#c9dca3" transform="rotate(35 639.3 2.2)"/><rect x="769.8" y="-0.4" width="4.7" height="7.2" fill="#c9dca3" transform="rotate(-30 772.2 3.2)"/><rect x="263.6" y="17.8" width="7.6" height="7.6" fill="#c9dca3" transform="rotate(0 267.4 21.6)"/><rect x="435.2" y="14.6" width="6.6" height="4.2" fill="#c9dca3" transform="rotate(20 438.5 16.6)"/><rect x="585.7" y="18.7" width="5.4" height="7.3" fill="#ebe2b4" transform="rotate(20 588.4 22.3)"/><rect x="164.5" y="43.7" width="5.3" height="7.2" fill="#ebe2b4" transform="rotate(0 167.2 47.3)"/><rect x="698.3" y="51.3" width="4.2" height="6.8" fill="#c9dca3" transform="rotate(0 700.4 54.6)"/><rect x="118.3" y="150.8" width="7.1" height="5.4" fill="#ebe2b4" transform="rotate(35 121.9 153.4)"/><rect x="163.2" y="161.2" width="5.8" height="6" fill="#c9dca3" transform="rotate(35 166.1 164.2)"/><rect x="90.6" y="184.4" width="7.4" height="6.5" fill="#ebe2b4" transform="rotate(-30 94.3 187.7)"/><rect x="473.4" y="210.2" width="7.9" height="4.9" fill="#ebe2b4" transform="rotate(60 477.3 212.7)"/><rect x="156.1" y="220.4" width="5.3" height="6.1" fill="#ebe2b4" transform="rotate(-30 158.7 223.4)"/><rect x="347.7" y="227.2" width="8.2" height="6.5" fill="#ebe2b4" transform="rotate(-30 351.8 230.5)"/><rect x="376.5" y="238.2" width="4.3" height="6.9" fill="#c9dca3" transform="rotate(60 378.6 241.6)"/><rect x="409.4" y="235.4" width="8.2" height="5.3" fill="#c9dca3" transform="rotate(20 413.5 238.1)"/><rect x="521.7" y="236.2" width="8.5" height="4.2" fill="#c9dca3" transform="rotate(35 526 238.3)"/><rect x="822.1" y="229.4" width="6.2" height="6.1" fill="#c9dca3" transform="rotate(0 825.2 232.5)"/><rect x="546.4" y="273.2" width="8.6" height="7.6" fill="#ebe2b4" transform="rotate(0 550.7 277)"/><rect x="53.2" y="307.3" width="8.6" height="8" fill="#ebe2b4" transform="rotate(35 57.5 311.3)"/><rect x="89.4" y="293" width="6.7" height="4.5" fill="#c9dca3" transform="rotate(-30 92.8 295.3)"/><rect x="308" y="293.1" width="6.8" height="6" fill="#c9dca3" transform="rotate(60 311.4 296.1)"/><rect x="587.4" y="289.4" width="7.2" height="6.9" fill="#c9dca3" transform="rotate(-30 591 292.8)"/><rect x="737.8" y="302.3" width="6.6" height="7.3" fill="#c9dca3" transform="rotate(60 741.1 305.9)"/><rect x="774" y="304" width="5.4" height="4.1" fill="#c9dca3" transform="rotate(0 776.7 306)"/><rect x="810.7" y="301.2" width="6" height="7.1" fill="#c9dca3" transform="rotate(0 813.7 304.8)"/><rect x="110.9" y="336.5" width="5.9" height="5.6" fill="#c9dca3" transform="rotate(0 113.8 339.3)"/><rect x="239.6" y="337" width="8.2" height="7.2" fill="#c9dca3" transform="rotate(20 243.7 340.7)"/><rect x="368.7" y="337.1" width="7.7" height="7.1" fill="#ebe2b4" transform="rotate(0 372.5 340.6)"/><rect x="60.5" y="383.8" width="5.1" height="7.7" fill="#ebe2b4" transform="rotate(0 63 387.7)"/><rect x="598.3" y="385.4" width="7.1" height="6.9" fill="#c9dca3" transform="rotate(35 601.9 388.8)"/><rect x="418.7" y="415.8" width="7" height="5.2" fill="#ebe2b4" transform="rotate(60 422.2 418.3)"/><rect x="268" y="447.8" width="6.5" height="7.4" fill="#c9dca3" transform="rotate(0 271.3 451.5)"/><rect x="227.7" y="469.3" width="8" height="4.5" fill="#c9dca3" transform="rotate(20 231.7 471.5)"/><rect x="387.3" y="466" width="8.4" height="7.2" fill="#c9dca3" transform="rotate(0 391.4 469.6)"/><rect x="447.8" y="467.9" width="5.1" height="7.3" fill="#ebe2b4" transform="rotate(-30 450.3 471.6)"/>
<path d="M90 243L108 245L105 278L79 274Z" fill="#ebe2b4"/>
<path d="M635 374L659 374L681 360L689 366L686 401L676 415L654 404L640 387Z" fill="#ebe2b4"/>
<path d="M505 328L523 326L524 340L506 342Z" fill="#ebe2b4"/>
<path d="M283 352L297 356L293 376L280 372Z" fill="#ebe2b4"/>
<path d="M52 128L60 124L63 136L54 140Z" fill="#ebe2b4"/>
<path d="M98 172L110 176L106 186L95 182Z" fill="#ebe2b4"/>
<path d="M325 20L336 22L334 36L323 34Z" fill="#ebe2b4"/>
<path d="M97 330L101 318L115 314L136 325L120 330Z" fill="#c9dca3"/>
<path d="M117 393L131 382L139 387L120 412L112 406Z" fill="#c9dca3"/>
<path d="M44 30L62 32L74 50L64 66L46 70L42 50Z" fill="#c9dca3"/>
<path d="M438 193L450 190L454 205L446 217L437 210Z" fill="#c9dca3"/>
<path d="M338 175L352 166L358 174L344 184Z" fill="#c9dca3"/>
<path d="M602 417L651 401L654 409L602 436Z" fill="#c9dca3"/>
<path d="M452 178L470 172L486 176L492 190L470 196L455 190Z" fill="#c9dca3"/>
<path d="M707 62L717 50L733 54L742 70L730 86L712 84L703 74Z" fill="#c9dca3"/>
<path d="M0 262L8 268L16 285L8 300L0 296Z" fill="#c9dca3"/>
<path d="M470 275L484 272L486 284L472 286Z" fill="#c9dca3"/>
<path d="M652 295L660 293L661 302L653 303Z" fill="#c9dca3"/>
<path d="M-5 404C-0.5 391.5 16.7 413 22 417C27.3 421 24.3 426.5 27 428C29.7 429.5 34.8 428.2 38 426C41.2 423.8 43.7 419.2 46 415C48.3 410.8 49.2 403.8 52 401C54.8 398.2 58.5 397.5 63 398C67.5 398.5 74 401.2 79 404C84 406.8 88 410.5 93 415C98 419.5 104.5 427 109 431C113.5 435 116.3 436.3 120 439C123.7 441.7 125.5 444.2 131 447C136.5 449.8 146.7 456 153 456C159.3 456 163.5 448 169 447C174.5 446 181.5 447.5 186 450C190.5 452.5 193.3 458 196 462C198.7 466 200.3 469 202 474C203.7 479 240.5 489 206 492C171.5 495 30.2 506.7 -5 492C-40.2 477.3 -9.5 416.5 -5 404Z" fill="#73b5e5"/>
<path d="M-5 317C-2.8 304.8 4.5 323.5 8 327C11.5 330.5 14 334.3 16 338C18 341.7 20 345.3 20 349C20 352.7 18.3 357.7 16 360C13.7 362.3 6.8 360.3 6 363C5.2 365.7 10.7 371 11 376C11.3 381 10.7 389 8 393C5.3 397 -2.8 412.7 -5 400C-7.2 387.3 -7.2 329.2 -5 317Z" fill="#73b5e5"/>
<path d="M46 415C46 414.7 49.2 402.3 52 399C54.8 395.7 58.3 394.8 63 395C67.7 395.2 74.7 397.3 80 400C85.3 402.7 89.8 406.5 95 411C100.2 415.5 106.5 423 111 427C115.5 431 118.3 432.3 122 435C125.7 437.7 127.8 440.2 133 443C138.2 445.8 147 452 153 452C159 452 163.2 444 169 443C174.8 442 183 443.5 188 446C193 448.5 197.5 455.5 199 458C200.5 460.5 199.2 462.3 197 461C194.8 459.7 190.7 452.3 186 450C181.3 447.7 174.5 446 169 447C163.5 448 159.3 456 153 456C146.7 456 136.5 449.8 131 447C125.5 444.2 123.7 441.7 120 439C116.3 436.3 113.5 435 109 431C104.5 427 98 419.5 93 415C88 410.5 84 406.8 79 404C74 401.2 67.5 398.5 63 398C58.5 397.5 54.8 398.2 52 401C49.2 403.8 46 415.3 46 415Z" fill="#c9dca3" opacity=".9"/>
<path d="M0 398C1.7 396.3 6.3 395 10 395C13.7 395 17 395.8 22 398C27 400.2 36 405.2 40 408C44 410.8 46.3 412 46 415C45.7 418 41.2 423.8 38 426C34.8 428.2 29.7 429.5 27 428C24.3 426.5 26.5 420.8 22 417C17.5 413.2 3.7 408.2 0 405C-3.7 401.8 -1.7 399.7 0 398Z" fill="#dfe3c6"/>
<path d="M11 240C14.7 249.2 25.7 281.3 33 295C40.3 308.7 45.5 315.2 55 322C64.5 328.8 77.8 335.2 90 336C102.2 336.8 115.7 329.3 128 327C140.3 324.7 153.5 321 164 322C174.5 323 182 327.5 191 333C200 338.5 210.7 346.8 218 355C225.3 363.2 230.3 369.3 235 382C239.7 394.7 243.3 418.3 246 431C248.7 443.7 245.3 451.7 251 458C256.7 464.3 271.8 464.3 280 469C288.2 473.7 296.7 483.2 300 486" stroke="#b9b6b0" stroke-width="1" fill="none"/>
<path d="M596 447C596.5 440.7 595.3 416.2 599 409C602.7 401.8 611.2 407.7 618 404C624.8 400.3 635.8 391.7 640 387C644.2 382.3 639.8 378.2 643 376C646.2 373.8 652.7 376.7 659 374C665.3 371.3 675.5 364.2 681 360C686.5 355.8 688.3 354.5 692 349C695.7 343.5 698.5 332 703 327C707.5 322 713.5 321.7 719 319C724.5 316.3 731.3 311 736 311C740.7 311 741.7 316.7 747 319C752.3 321.3 760.8 322.7 768 325C775.2 327.3 784.5 329.8 790 333C795.5 336.2 795.5 343.2 801 344C806.5 344.8 817.2 340.2 823 338C828.8 335.8 833.8 332.2 836 331" stroke="#fff" stroke-width="2.2" fill="none" stroke-linecap="round" stroke-linejoin="round"/>
<path d="M232 -3C231 3.3 228.3 21.2 226 35C223.7 48.8 220.7 65.3 218 80C215.3 94.7 210.7 109.7 210 123C209.3 136.3 212.7 148.7 214 160C215.3 171.3 217.7 177.7 218 191C218.3 204.3 215.3 228.2 216 240C216.7 251.8 220.3 252 222 262C223.7 272 225.3 293.7 226 300M-3 248C4.3 250.8 26.8 260 41 265C55.2 270 66.2 273 82 278C97.8 283 117.8 290 136 295C154.2 300 176.3 304.7 191 308C205.7 311.3 216.3 313.8 224 315C231.7 316.2 227.7 316.7 237 315C246.3 313.3 269.5 307.2 280 305C290.5 302.8 290.8 302.3 300 302C309.2 301.7 329.2 302.8 335 303M16 322C24.7 325.7 52.5 336.7 68 344C83.5 351.3 96.7 358.8 109 366C121.3 373.2 131 379.8 142 387C153 394.2 164.2 401.7 175 409C185.8 416.3 196.2 423.2 207 431C217.8 438.8 228.5 446.8 240 456C251.5 465.2 270 481 276 486M41 355C46 357.2 62.3 361.7 71 368C79.7 374.3 85.7 384.8 93 393C100.3 401.2 106.8 410.2 115 417C123.2 423.8 133 429.3 142 434C151 438.7 158.2 441 169 445C179.8 449 196.5 451.2 207 458C217.5 464.8 227.8 481.3 232 486M300 190C308 186 333.2 175.8 348 166C362.8 156.2 379.5 140 389 131C398.5 122 401.3 122.5 405 112C408.7 101.5 403.7 84 411 68C418.3 52 441.5 27.8 449 16C456.5 4.2 454.8 0.2 456 -3M494 20C503.3 22.2 531.5 30.2 550 33C568.5 35.8 582.3 36.3 605 37C627.7 37.7 663.3 37.3 686 37C708.7 36.7 727.3 37.5 741 35C754.7 32.5 752.2 26.2 768 22C783.8 17.8 824.7 12 836 10M561 8C568.3 13 588.7 27.5 605 38C621.3 48.5 638.2 59.2 659 71C679.8 82.8 710.5 98.2 730 109C749.5 119.8 758.3 126.5 776 136C793.7 145.5 826 161 836 166M741 38C741.8 44.3 748.3 63.7 746 76C743.7 88.3 734.2 99.2 727 112C719.8 124.8 708.8 139 703 153C697.2 167 693.8 188.8 692 196M836 105C831.5 105.7 819 103.3 809 109C799 114.7 791 125.8 776 139C761 152.2 728.5 179.8 719 188M416 265C418.7 265.2 422.8 267 432 266C441.2 265 457.8 261 471 259C484.2 257 496.2 256.8 511 254C525.8 251.2 545.2 245.2 560 242C574.8 238.8 586.7 237.8 600 235C613.3 232.2 633.3 226.7 640 225M470 420C473.3 417.5 483.5 409.7 490 405C496.5 400.3 500.8 396.2 509 392C517.2 387.8 528.8 382.2 539 380C549.2 377.8 559.8 378.5 570 378.5C580.2 378.5 588.3 378.6 600 380C611.7 381.4 633.3 385.8 640 387M320 350C324.2 353.7 335.8 364.5 345 372C354.2 379.5 365.8 387 375 395C384.2 403 395.8 415.8 400 420M545 55C543.3 60.8 538.8 77.5 535 90C531.2 102.5 525.3 116.7 522 130C518.7 143.3 516.2 163.3 515 170M665 130C662.5 135 655.5 149 650 160C644.5 171 635 190 632 196M655 60C653.8 65 650.5 80 648 90C645.5 100 641.3 115 640 120M120 415C125 406.7 140.5 381 150 365C159.5 349 168.7 334.8 177 319C185.3 303.2 193.5 283.2 200 270C206.5 256.8 213.3 245 216 240M160 440C165.8 430.8 183.3 403.3 195 385C206.7 366.7 220.8 344.2 230 330C239.2 315.8 246.7 305 250 300M-3 60C4.2 63.3 26.2 70 40 80C53.8 90 68.3 106.7 80 120C91.7 133.3 105 153.3 110 160M0 180C5 185.8 20 204.2 30 215C40 225.8 51.3 234.5 60 245C68.7 255.5 78.3 272.5 82 278M100 10C96.7 18.3 86.7 45 80 60C73.3 75 68.3 86.7 60 100C51.7 113.3 35 133.3 30 140M260 20C266.7 23.3 286.7 35.8 300 40C313.3 44.2 326.7 45.3 340 45C353.3 44.7 368.2 34.2 380 38C391.8 41.8 405.8 63 411 68M260 160C265 161.7 283.3 165 290 170C296.7 175 299.2 180 300 190C300.8 200 298.3 219.3 295 230C291.7 240.7 282.5 250 280 254M230 130C236.7 131.7 258.3 135 270 140C281.7 145 295 156.7 300 160M420 320C428.3 319.7 453.3 318 470 318C486.7 318 503.3 320 520 320C536.7 320 553.3 321.3 570 318C586.7 314.7 605 306.3 620 300C635 293.7 646.7 285 660 280C673.3 275 693.3 271.7 700 270M600 235C603.3 239.2 613.3 249.2 620 260C626.7 270.8 635 288.3 640 300C645 311.7 641.3 321.8 650 330C658.7 338.2 685 345.8 692 349M440 300C442.5 306.7 450 326.7 455 340C460 353.3 462.5 370 470 380C477.5 390 495 396.7 500 400M700 270C706.7 266.7 725 255 740 250C755 245 774 240 790 240C806 240 828.3 248.3 836 250M440 240C446.7 238.3 465 232.5 480 230C495 227.5 515 228.3 530 225C545 221.7 563.3 212.5 570 210M300 302C301.7 306.7 306.7 322 310 330C313.3 338 318.3 346.7 320 350M280 400C286.7 403.3 306.7 413.3 320 420C333.3 426.7 346.2 436.3 360 440C373.8 443.7 395.8 441.7 403 442M250 300C256.7 305 278.3 321.7 290 330C301.7 338.3 315 346.7 320 350M380 460C385 461.7 400 467.5 410 470C420 472.5 435 474.2 440 475" stroke="#cfc8bd" stroke-width="4.199999999999999" fill="none" stroke-linecap="round" stroke-linejoin="round"/>
<path d="M232 -3C231 3.3 228.3 21.2 226 35C223.7 48.8 220.7 65.3 218 80C215.3 94.7 210.7 109.7 210 123C209.3 136.3 212.7 148.7 214 160C215.3 171.3 217.7 177.7 218 191C218.3 204.3 215.3 228.2 216 240C216.7 251.8 220.3 252 222 262C223.7 272 225.3 293.7 226 300M-3 248C4.3 250.8 26.8 260 41 265C55.2 270 66.2 273 82 278C97.8 283 117.8 290 136 295C154.2 300 176.3 304.7 191 308C205.7 311.3 216.3 313.8 224 315C231.7 316.2 227.7 316.7 237 315C246.3 313.3 269.5 307.2 280 305C290.5 302.8 290.8 302.3 300 302C309.2 301.7 329.2 302.8 335 303M16 322C24.7 325.7 52.5 336.7 68 344C83.5 351.3 96.7 358.8 109 366C121.3 373.2 131 379.8 142 387C153 394.2 164.2 401.7 175 409C185.8 416.3 196.2 423.2 207 431C217.8 438.8 228.5 446.8 240 456C251.5 465.2 270 481 276 486M41 355C46 357.2 62.3 361.7 71 368C79.7 374.3 85.7 384.8 93 393C100.3 401.2 106.8 410.2 115 417C123.2 423.8 133 429.3 142 434C151 438.7 158.2 441 169 445C179.8 449 196.5 451.2 207 458C217.5 464.8 227.8 481.3 232 486M300 190C308 186 333.2 175.8 348 166C362.8 156.2 379.5 140 389 131C398.5 122 401.3 122.5 405 112C408.7 101.5 403.7 84 411 68C418.3 52 441.5 27.8 449 16C456.5 4.2 454.8 0.2 456 -3M494 20C503.3 22.2 531.5 30.2 550 33C568.5 35.8 582.3 36.3 605 37C627.7 37.7 663.3 37.3 686 37C708.7 36.7 727.3 37.5 741 35C754.7 32.5 752.2 26.2 768 22C783.8 17.8 824.7 12 836 10M561 8C568.3 13 588.7 27.5 605 38C621.3 48.5 638.2 59.2 659 71C679.8 82.8 710.5 98.2 730 109C749.5 119.8 758.3 126.5 776 136C793.7 145.5 826 161 836 166M741 38C741.8 44.3 748.3 63.7 746 76C743.7 88.3 734.2 99.2 727 112C719.8 124.8 708.8 139 703 153C697.2 167 693.8 188.8 692 196M836 105C831.5 105.7 819 103.3 809 109C799 114.7 791 125.8 776 139C761 152.2 728.5 179.8 719 188M416 265C418.7 265.2 422.8 267 432 266C441.2 265 457.8 261 471 259C484.2 257 496.2 256.8 511 254C525.8 251.2 545.2 245.2 560 242C574.8 238.8 586.7 237.8 600 235C613.3 232.2 633.3 226.7 640 225M470 420C473.3 417.5 483.5 409.7 490 405C496.5 400.3 500.8 396.2 509 392C517.2 387.8 528.8 382.2 539 380C549.2 377.8 559.8 378.5 570 378.5C580.2 378.5 588.3 378.6 600 380C611.7 381.4 633.3 385.8 640 387M320 350C324.2 353.7 335.8 364.5 345 372C354.2 379.5 365.8 387 375 395C384.2 403 395.8 415.8 400 420M545 55C543.3 60.8 538.8 77.5 535 90C531.2 102.5 525.3 116.7 522 130C518.7 143.3 516.2 163.3 515 170M665 130C662.5 135 655.5 149 650 160C644.5 171 635 190 632 196M655 60C653.8 65 650.5 80 648 90C645.5 100 641.3 115 640 120M120 415C125 406.7 140.5 381 150 365C159.5 349 168.7 334.8 177 319C185.3 303.2 193.5 283.2 200 270C206.5 256.8 213.3 245 216 240M160 440C165.8 430.8 183.3 403.3 195 385C206.7 366.7 220.8 344.2 230 330C239.2 315.8 246.7 305 250 300M-3 60C4.2 63.3 26.2 70 40 80C53.8 90 68.3 106.7 80 120C91.7 133.3 105 153.3 110 160M0 180C5 185.8 20 204.2 30 215C40 225.8 51.3 234.5 60 245C68.7 255.5 78.3 272.5 82 278M100 10C96.7 18.3 86.7 45 80 60C73.3 75 68.3 86.7 60 100C51.7 113.3 35 133.3 30 140M260 20C266.7 23.3 286.7 35.8 300 40C313.3 44.2 326.7 45.3 340 45C353.3 44.7 368.2 34.2 380 38C391.8 41.8 405.8 63 411 68M260 160C265 161.7 283.3 165 290 170C296.7 175 299.2 180 300 190C300.8 200 298.3 219.3 295 230C291.7 240.7 282.5 250 280 254M230 130C236.7 131.7 258.3 135 270 140C281.7 145 295 156.7 300 160M420 320C428.3 319.7 453.3 318 470 318C486.7 318 503.3 320 520 320C536.7 320 553.3 321.3 570 318C586.7 314.7 605 306.3 620 300C635 293.7 646.7 285 660 280C673.3 275 693.3 271.7 700 270M600 235C603.3 239.2 613.3 249.2 620 260C626.7 270.8 635 288.3 640 300C645 311.7 641.3 321.8 650 330C658.7 338.2 685 345.8 692 349M440 300C442.5 306.7 450 326.7 455 340C460 353.3 462.5 370 470 380C477.5 390 495 396.7 500 400M700 270C706.7 266.7 725 255 740 250C755 245 774 240 790 240C806 240 828.3 248.3 836 250M440 240C446.7 238.3 465 232.5 480 230C495 227.5 515 228.3 530 225C545 221.7 563.3 212.5 570 210M300 302C301.7 306.7 306.7 322 310 330C313.3 338 318.3 346.7 320 350M280 400C286.7 403.3 306.7 413.3 320 420C333.3 426.7 346.2 436.3 360 440C373.8 443.7 395.8 441.7 403 442M250 300C256.7 305 278.3 321.7 290 330C301.7 338.3 315 346.7 320 350M380 460C385 461.7 400 467.5 410 470C420 472.5 435 474.2 440 475" stroke="#fff" stroke-width="2.8" fill="none" stroke-linecap="round" stroke-linejoin="round"/>
<path d="M-3 134C6.7 136.2 36.3 141.7 55 147C73.7 152.3 92.7 158.7 109 166C125.3 173.3 140.2 184.2 153 191C165.8 197.8 175.2 201.5 186 207C196.8 212.5 202.3 216.2 218 224C233.7 231.8 265.2 245.5 280 254C294.8 262.5 297.8 267.8 307 275C316.2 282.2 327.5 291.2 335 297C342.5 302.8 348.5 303.7 352 310C355.5 316.3 353 325.3 356 335C359 344.7 364.5 354.7 370 368C375.5 381.3 383.5 402.7 389 415C394.5 427.3 395.2 430.2 403 442C410.8 453.8 430.5 478.7 436 486M145 85C144.5 89 144.3 99.5 142 109C139.7 118.5 134.7 132 131 142C127.3 152 124.5 160.8 120 169C115.5 177.2 110.3 184.7 104 191C97.7 197.3 94.8 198.8 82 207C69.2 215.2 41.2 230.8 27 240C12.8 249.2 2 258.3 -3 262M479 169C480.2 170.5 480.8 175.5 486 178C491.2 180.5 497.7 183.7 510 184C522.3 184.3 551.7 180.7 560 180" stroke="#cfc8bd" stroke-width="6.199999999999999" fill="none" stroke-linecap="round" stroke-linejoin="round"/>
<path d="M-3 134C6.7 136.2 36.3 141.7 55 147C73.7 152.3 92.7 158.7 109 166C125.3 173.3 140.2 184.2 153 191C165.8 197.8 175.2 201.5 186 207C196.8 212.5 202.3 216.2 218 224C233.7 231.8 265.2 245.5 280 254C294.8 262.5 297.8 267.8 307 275C316.2 282.2 327.5 291.2 335 297C342.5 302.8 348.5 303.7 352 310C355.5 316.3 353 325.3 356 335C359 344.7 364.5 354.7 370 368C375.5 381.3 383.5 402.7 389 415C394.5 427.3 395.2 430.2 403 442C410.8 453.8 430.5 478.7 436 486M145 85C144.5 89 144.3 99.5 142 109C139.7 118.5 134.7 132 131 142C127.3 152 124.5 160.8 120 169C115.5 177.2 110.3 184.7 104 191C97.7 197.3 94.8 198.8 82 207C69.2 215.2 41.2 230.8 27 240C12.8 249.2 2 258.3 -3 262M479 169C480.2 170.5 480.8 175.5 486 178C491.2 180.5 497.7 183.7 510 184C522.3 184.3 551.7 180.7 560 180" stroke="#fff" stroke-width="4.8" fill="none" stroke-linecap="round" stroke-linejoin="round"/>
<path d="M71 -3C72.8 -0.7 73.8 3.2 82 11C90.2 18.8 109.5 32.7 120 44C130.5 55.3 139.5 69.5 145 79C150.5 88.5 148 95 153 101C158 107 167.8 111.7 175 115C182.2 118.3 186 121 196 121C206 121 221.3 119.2 235 115C248.7 110.8 264.7 100 278 96C291.3 92 304.2 90.2 315 91C325.8 91.8 333.8 96.2 343 101C352.2 105.8 361 112.3 370 120C379 127.7 388.3 138.3 397 147C405.7 155.7 414.2 165.2 422 172C429.8 178.8 435.8 184.2 444 188C452.2 191.8 459.7 194.3 471 195C482.3 195.7 497.2 193.3 512 192C526.8 190.7 546.8 187.7 560 187C573.2 186.3 579 186.5 591 188C603 189.5 617 193.2 632 196C647 198.8 665.2 203.3 681 205C696.8 206.7 712.5 204.2 727 206C741.5 207.8 749.8 210.8 768 216C786.2 221.2 824.7 233.5 836 237M494 -3C494.5 4.3 496.3 25.5 497 41C497.7 56.5 498.7 75 498 90C497.3 105 496.2 117.8 493 131C489.8 144.2 485 156.3 479 169C473 181.7 463.3 195.2 457 207C450.7 218.8 447.8 230.3 441 240C434.2 249.7 424.7 256.8 416 265C407.3 273.2 397.5 282.8 389 289C380.5 295.2 371.5 298.8 365 302C358.5 305.2 352.5 307 350 308" stroke="#cfc8bd" stroke-width="7.800000000000001" fill="none" stroke-linecap="round" stroke-linejoin="round"/>
<path d="M71 -3C72.8 -0.7 73.8 3.2 82 11C90.2 18.8 109.5 32.7 120 44C130.5 55.3 139.5 69.5 145 79C150.5 88.5 148 95 153 101C158 107 167.8 111.7 175 115C182.2 118.3 186 121 196 121C206 121 221.3 119.2 235 115C248.7 110.8 264.7 100 278 96C291.3 92 304.2 90.2 315 91C325.8 91.8 333.8 96.2 343 101C352.2 105.8 361 112.3 370 120C379 127.7 388.3 138.3 397 147C405.7 155.7 414.2 165.2 422 172C429.8 178.8 435.8 184.2 444 188C452.2 191.8 459.7 194.3 471 195C482.3 195.7 497.2 193.3 512 192C526.8 190.7 546.8 187.7 560 187C573.2 186.3 579 186.5 591 188C603 189.5 617 193.2 632 196C647 198.8 665.2 203.3 681 205C696.8 206.7 712.5 204.2 727 206C741.5 207.8 749.8 210.8 768 216C786.2 221.2 824.7 233.5 836 237M494 -3C494.5 4.3 496.3 25.5 497 41C497.7 56.5 498.7 75 498 90C497.3 105 496.2 117.8 493 131C489.8 144.2 485 156.3 479 169C473 181.7 463.3 195.2 457 207C450.7 218.8 447.8 230.3 441 240C434.2 249.7 424.7 256.8 416 265C407.3 273.2 397.5 282.8 389 289C380.5 295.2 371.5 298.8 365 302C358.5 305.2 352.5 307 350 308" stroke="#fff" stroke-width="6.4" fill="none" stroke-linecap="round" stroke-linejoin="round"/>
<path d="M71 -3C72.8 -0.7 73.8 3.2 82 11C90.2 18.8 109.5 32.7 120 44C130.5 55.3 139.5 69.5 145 79C150.5 88.5 148 95 153 101C158 107 167.8 111.7 175 115C182.2 118.3 186 121 196 121C206 121 221.3 119.2 235 115C248.7 110.8 264.7 100 278 96C291.3 92 304.2 90.2 315 91C325.8 91.8 333.8 96.2 343 101C352.2 105.8 361 112.3 370 120C379 127.7 388.3 138.3 397 147C405.7 155.7 414.2 165.2 422 172C429.8 178.8 435.8 184.2 444 188C452.2 191.8 459.7 194.3 471 195C482.3 195.7 497.2 193.3 512 192C526.8 190.7 546.8 187.7 560 187C573.2 186.3 579 186.5 591 188C603 189.5 617 193.2 632 196C647 198.8 665.2 203.3 681 205C696.8 206.7 712.5 204.2 727 206C741.5 207.8 749.8 210.8 768 216C786.2 221.2 824.7 233.5 836 237M494 -3C494.5 4.3 496.3 25.5 497 41C497.7 56.5 498.7 75 498 90C497.3 105 496.2 117.8 493 131C489.8 144.2 485 156.3 479 169C473 181.7 463.3 195.2 457 207C450.7 218.8 447.8 230.3 441 240C434.2 249.7 424.7 256.8 416 265C407.3 273.2 397.5 282.8 389 289C380.5 295.2 371.5 298.8 365 302C358.5 305.2 352.5 307 350 308" stroke="#cfc8bd" stroke-width=".7" fill="none" opacity=".7"/>
<circle cx="458" cy="188" r="5" fill="#c9dca3" stroke="#fff" stroke-width="1.6"/>
<circle cx="470" cy="180" r="6" fill="#c9dca3" stroke="#fff" stroke-width="1.6"/>
<circle cx="476" cy="198" r="5" fill="#c9dca3" stroke="#fff" stroke-width="1.6"/>
<circle cx="448" cy="196" r="4" fill="#c9dca3" stroke="#fff" stroke-width="1.6"/>
<circle cx="123" cy="172" r="5" fill="#e9e2d9" stroke="#fff" stroke-width="1.6"/>
<circle cx="118" cy="182" r="4" fill="#e9e2d9" stroke="#fff" stroke-width="1.6"/>
<defs><path id="lp0" d="M71 368.3Q85.2 402.5 167.8 442"/><path id="lp1" d="M509.3 391.5Q538.7 373.3 570.5 378.6"/></defs><g font-family="'Liberation Sans','DejaVu Sans',sans-serif"><text x="168.5" y="30.6" font-size="9.8" font-weight="400" fill="#6f6a64" text-anchor="middle" textLength="69.6" lengthAdjust="spacing" stroke="#fff" stroke-opacity=".8" stroke-width="2" paint-order="stroke" stroke-linejoin="round">Küçük Çamlıca</text><text x="56.5" y="48.3" font-size="9.8" font-weight="400" fill="#6f6a64" text-anchor="middle" textLength="45" lengthAdjust="spacing" stroke="#fff" stroke-opacity=".8" stroke-width="2" paint-order="stroke" stroke-linejoin="round">Validebağ</text><text x="55.5" y="58" font-size="9.8" font-weight="400" fill="#6f6a64" text-anchor="middle" textLength="33" lengthAdjust="spacing" stroke="#fff" stroke-opacity=".8" stroke-width="2" paint-order="stroke" stroke-linejoin="round">Korusu</text><text x="30" y="290.5" font-size="12.2" font-weight="400" fill="#7b6c5f" text-anchor="middle" textLength="57.3" lengthAdjust="spacing" stroke="#fff" stroke-opacity=".8" stroke-width="2" paint-order="stroke" stroke-linejoin="round">Kızıltoprak</text><text x="224.3" y="349.2" font-size="16.8" font-weight="400" fill="#222" text-anchor="middle" textLength="60" lengthAdjust="spacing" stroke="#fff" stroke-opacity=".8" stroke-width="2" paint-order="stroke" stroke-linejoin="round">Kadıköy</text><text x="34.8" y="409.2" font-size="10.2" font-weight="400" fill="#6f6a64" text-anchor="middle" textLength="56" lengthAdjust="spacing" stroke="#fff" stroke-opacity=".8" stroke-width="2" paint-order="stroke" stroke-linejoin="round">Fenerbahçe</text><text x="34.2" y="418.8" font-size="10.2" font-weight="400" fill="#6f6a64" text-anchor="middle" textLength="38.2" lengthAdjust="spacing" stroke="#fff" stroke-opacity=".8" stroke-width="2" paint-order="stroke" stroke-linejoin="round">Orduevi</text><text x="370" y="473.4" font-size="12.2" font-weight="400" fill="#7b6c5f" text-anchor="middle" textLength="46.4" lengthAdjust="spacing" stroke="#fff" stroke-opacity=".8" stroke-width="2" paint-order="stroke" stroke-linejoin="round">Bostancı</text><text x="370.9" y="326" font-size="10.2" font-weight="400" fill="#6f6a64" text-anchor="middle" textLength="46.4" lengthAdjust="spacing" stroke="#fff" stroke-opacity=".8" stroke-width="2" paint-order="stroke" stroke-linejoin="round">içerenköy</text><text x="370" y="336" font-size="10.2" font-weight="400" fill="#6f6a64" text-anchor="middle" textLength="68.2" lengthAdjust="spacing" stroke="#fff" stroke-opacity=".8" stroke-width="2" paint-order="stroke" stroke-linejoin="round">carrefour avm</text><text x="529.3" y="219.7" font-size="12" font-weight="400" fill="#7b6c5f" text-anchor="middle" textLength="28.1" lengthAdjust="spacing" stroke="#fff" stroke-opacity=".8" stroke-width="2" paint-order="stroke" stroke-linejoin="round">Doğu</text><text x="529" y="233.4" font-size="12" font-weight="400" fill="#7b6c5f" text-anchor="middle" textLength="45" lengthAdjust="spacing" stroke="#fff" stroke-opacity=".8" stroke-width="2" paint-order="stroke" stroke-linejoin="round">Ataşehir</text><text x="565.8" y="154.2" font-size="12" font-weight="400" fill="#7b6c5f" text-anchor="middle" textLength="34" lengthAdjust="spacing" stroke="#fff" stroke-opacity=".8" stroke-width="2" paint-order="stroke" stroke-linejoin="round">Tatlısu</text><text x="751.3" y="26.7" font-size="12.6" font-weight="400" fill="#2c2c2c" text-anchor="middle" textLength="80.5" lengthAdjust="spacing" stroke="#fff" stroke-opacity=".8" stroke-width="2" paint-order="stroke" stroke-linejoin="round">Yukarıdudullu</text><text x="531" y="458.3" font-size="10.2" font-weight="400" fill="#6f6a64" text-anchor="middle" textLength="61" lengthAdjust="spacing" stroke="#fff" stroke-opacity=".8" stroke-width="2" paint-order="stroke" stroke-linejoin="round">İkmal Maliye</text><text x="530.3" y="468.7" font-size="10.2" font-weight="400" fill="#6f6a64" text-anchor="middle" textLength="74.8" lengthAdjust="spacing" stroke="#fff" stroke-opacity=".8" stroke-width="2" paint-order="stroke" stroke-linejoin="round">Okulu ve Eğitim</text><text x="530.4" y="477.4" font-size="10.2" font-weight="400" fill="#6f6a64" text-anchor="middle" textLength="36.8" lengthAdjust="spacing" stroke="#fff" stroke-opacity=".8" stroke-width="2" paint-order="stroke" stroke-linejoin="round">Merkezi</text><text x="656.4" y="480.8" font-size="11.4" font-weight="400" fill="#6f6a64" text-anchor="middle" textLength="51.9" lengthAdjust="spacing" stroke="#fff" stroke-opacity=".8" stroke-width="2" paint-order="stroke" stroke-linejoin="round">Başıbüyük</text><text x="821.6" y="296.8" font-size="12" fill="#7b6c5f" stroke="#fff" stroke-opacity=".8" stroke-width="2" paint-order="stroke" stroke-linejoin="round">Bu</text><text transform="translate(251.9 107.1) rotate(-16.2)" y="3.3" font-size="9.2" fill="#2b2b2b" text-anchor="middle" textLength="113.5" lengthAdjust="spacingAndGlyphs" stroke="#fff" stroke-opacity=".8" stroke-width="2" paint-order="stroke" stroke-linejoin="round">O1-O2 ÇAMLICA BAĞLANTISI</text><text transform="translate(222.4 88.7) rotate(-74.5)" y="3.3" font-size="9.2" fill="#2b2b2b" text-anchor="middle" textLength="51" lengthAdjust="spacingAndGlyphs" stroke="#fff" stroke-opacity=".8" stroke-width="2" paint-order="stroke" stroke-linejoin="round">LIBADIYE CD</text><text transform="translate(214.2 170.6) rotate(79)" y="3.3" font-size="9.2" fill="#2b2b2b" text-anchor="middle" textLength="72.3" lengthAdjust="spacingAndGlyphs" stroke="#fff" stroke-opacity=".8" stroke-width="2" paint-order="stroke" stroke-linejoin="round">LIBADIYE CADDESI</text><text transform="translate(370 147.4) rotate(-41)" y="3.3" font-size="9.2" fill="#2b2b2b" text-anchor="middle" textLength="58" lengthAdjust="spacingAndGlyphs" stroke="#fff" stroke-opacity=".8" stroke-width="2" paint-order="stroke" stroke-linejoin="round">3004 CADDESI</text><text transform="translate(128 232.5) rotate(20.5)" y="3.3" font-size="9.2" fill="#2b2b2b" text-anchor="middle" textLength="76.9" lengthAdjust="spacingAndGlyphs" stroke="#fff" stroke-opacity=".8" stroke-width="2" paint-order="stroke" stroke-linejoin="round">MANDIRA CADDESI</text><text transform="translate(150.1 296.5) rotate(15.1)" y="3.3" font-size="9.2" fill="#2b2b2b" text-anchor="middle" textLength="141.3" lengthAdjust="spacingAndGlyphs" stroke="#fff" stroke-opacity=".8" stroke-width="2" paint-order="stroke" stroke-linejoin="round">FAHRETTIN KERIM GÖKAY CADDESI</text><text transform="translate(264.2 311) rotate(-5.6)" y="3.3" font-size="9.2" fill="#2b2b2b" text-anchor="middle" textLength="56.6" lengthAdjust="spacingAndGlyphs" stroke="#fff" stroke-opacity=".8" stroke-width="2" paint-order="stroke" stroke-linejoin="round">ATATÜRK CAD.</text><text transform="translate(173.3 410.6) rotate(34.3)" y="3.3" font-size="9.2" fill="#2b2b2b" text-anchor="middle" textLength="72.7" lengthAdjust="spacingAndGlyphs" stroke="#fff" stroke-opacity=".8" stroke-width="2" paint-order="stroke" stroke-linejoin="round">BAĞDAT CADDESI</text><text font-size="9.2" fill="#2b2b2b" dy="3.3" stroke="#fff" stroke-opacity=".8" stroke-width="2" paint-order="stroke" stroke-linejoin="round"><textPath href="#lp0" startOffset="50%" text-anchor="middle" textLength="126" lengthAdjust="spacingAndGlyphs">OPR. CEMIL TOPUZLU CADDESI</textPath></text><text transform="translate(357 379.7) rotate(35.1)" y="3.3" font-size="9.2" fill="#2b2b2b" text-anchor="middle" textLength="45" lengthAdjust="spacingAndGlyphs" stroke="#fff" stroke-opacity=".8" stroke-width="2" paint-order="stroke" stroke-linejoin="round">BAYAR CAD.</text><text transform="translate(471 258.6) rotate(-6.9)" y="3.3" font-size="9.2" fill="#2b2b2b" text-anchor="middle" textLength="79.7" lengthAdjust="spacingAndGlyphs" stroke="#fff" stroke-opacity=".8" stroke-width="2" paint-order="stroke" stroke-linejoin="round">DEREBOYU CADDESI</text><text font-size="9.2" fill="#2b2b2b" dy="3.3" stroke="#fff" stroke-opacity=".8" stroke-width="2" paint-order="stroke" stroke-linejoin="round"><textPath href="#lp1" startOffset="50%" text-anchor="middle" textLength="63.5" lengthAdjust="spacingAndGlyphs">EVREN CADDESI</textPath></text><text transform="translate(628.3 197) rotate(15)" y="3.3" font-size="9.2" fill="#2b2b2b" text-anchor="middle" textLength="57.9" lengthAdjust="spacingAndGlyphs" stroke="#fff" stroke-opacity=".8" stroke-width="2" paint-order="stroke" stroke-linejoin="round">TEM OTOYOLU</text><text transform="translate(526.2 92.8) rotate(-68)" y="3.3" font-size="9.2" fill="#2b2b2b" text-anchor="middle" textLength="61.8" lengthAdjust="spacingAndGlyphs" stroke="#fff" stroke-opacity=".8" stroke-width="2" paint-order="stroke" stroke-linejoin="round">İKBAL CADDESI</text><text transform="translate(614 14) rotate(-49)" y="3.3" font-size="9.2" fill="#2b2b2b" text-anchor="middle" textLength="38" lengthAdjust="spacingAndGlyphs" stroke="#fff" stroke-opacity=".8" stroke-width="2" paint-order="stroke" stroke-linejoin="round">İSTIKLAL</text><text transform="translate(662 40.4) rotate(3)" y="3.3" font-size="9.2" fill="#2b2b2b" text-anchor="middle" textLength="54" lengthAdjust="spacingAndGlyphs" stroke="#fff" stroke-opacity=".8" stroke-width="2" paint-order="stroke" stroke-linejoin="round">ALEMDAĞ CD.</text><text transform="translate(649.6 89.5) rotate(-69)" y="3.3" font-size="9.2" fill="#2b2b2b" text-anchor="middle" textLength="54" lengthAdjust="spacingAndGlyphs" stroke="#fff" stroke-opacity=".8" stroke-width="2" paint-order="stroke" stroke-linejoin="round">ACISU CADDE</text><text transform="translate(683 82.4) rotate(28.7)" y="3.3" font-size="9.2" fill="#2b2b2b" text-anchor="middle" textLength="48.2" lengthAdjust="spacingAndGlyphs" stroke="#fff" stroke-opacity=".8" stroke-width="2" paint-order="stroke" stroke-linejoin="round">NATO YOLU</text><text transform="translate(647.4 163) rotate(-59.8)" y="3.3" font-size="9.2" fill="#2b2b2b" text-anchor="middle" textLength="67.9" lengthAdjust="spacingAndGlyphs" stroke="#fff" stroke-opacity=".8" stroke-width="2" paint-order="stroke" stroke-linejoin="round">BAYRAKTAR BUL.</text><text transform="translate(707.5 158.3) rotate(-67.7)" y="3.3" font-size="9.2" fill="#2b2b2b" text-anchor="middle" textLength="82.6" lengthAdjust="spacingAndGlyphs" stroke="#fff" stroke-opacity=".8" stroke-width="2" paint-order="stroke" stroke-linejoin="round">NECIP FAZIL BULVARI</text><text transform="translate(793 124.7) rotate(-39.4)" y="3.3" font-size="9.2" fill="#2b2b2b" text-anchor="middle" textLength="49.4" lengthAdjust="spacingAndGlyphs" stroke="#fff" stroke-opacity=".8" stroke-width="2" paint-order="stroke" stroke-linejoin="round">BARAJ YOLU</text><text transform="translate(801.6 165.1) rotate(29.2)" y="3.3" font-size="9.2" fill="#2b2b2b" text-anchor="middle" textLength="39.1" lengthAdjust="spacingAndGlyphs" stroke="#fff" stroke-opacity=".8" stroke-width="2" paint-order="stroke" stroke-linejoin="round">2. CADDE</text><text transform="translate(808.5 263.2) rotate(-67.8)" y="3.3" font-size="9.2" fill="#2b2b2b" text-anchor="middle" textLength="32.4" lengthAdjust="spacingAndGlyphs" stroke="#fff" stroke-opacity=".8" stroke-width="2" paint-order="stroke" stroke-linejoin="round">6 SOKAK</text><rect x="338.5" y="99.5" width="25" height="13" rx="2.2" fill="#fff" stroke="#4a4a4a" stroke-width="1"/><text x="351" y="109.1" font-size="8.8" font-weight="700" fill="#333" text-anchor="middle">O-4</text><rect x="181" y="205.5" width="30" height="13" rx="2.2" fill="#fff" stroke="#4a4a4a" stroke-width="1"/><text x="196" y="215.1" font-size="8.8" font-weight="700" fill="#333" text-anchor="middle">D100</text><rect x="683.5" y="198.5" width="25" height="13" rx="2.2" fill="#fff" stroke="#4a4a4a" stroke-width="1"/><text x="696" y="208.1" font-size="8.8" font-weight="700" fill="#333" text-anchor="middle">O-4</text><ellipse cx="414.6" cy="240.3" rx="1.7" ry="2.5" fill="#f00"/></g>
</svg>
<div id="zoomctl"><span style="top:0">+</span><i></i><span style="top:30px">&#8722;</span></div>
<!--MAPEND--></div>
  </div>
</div>
</body>
</html>
